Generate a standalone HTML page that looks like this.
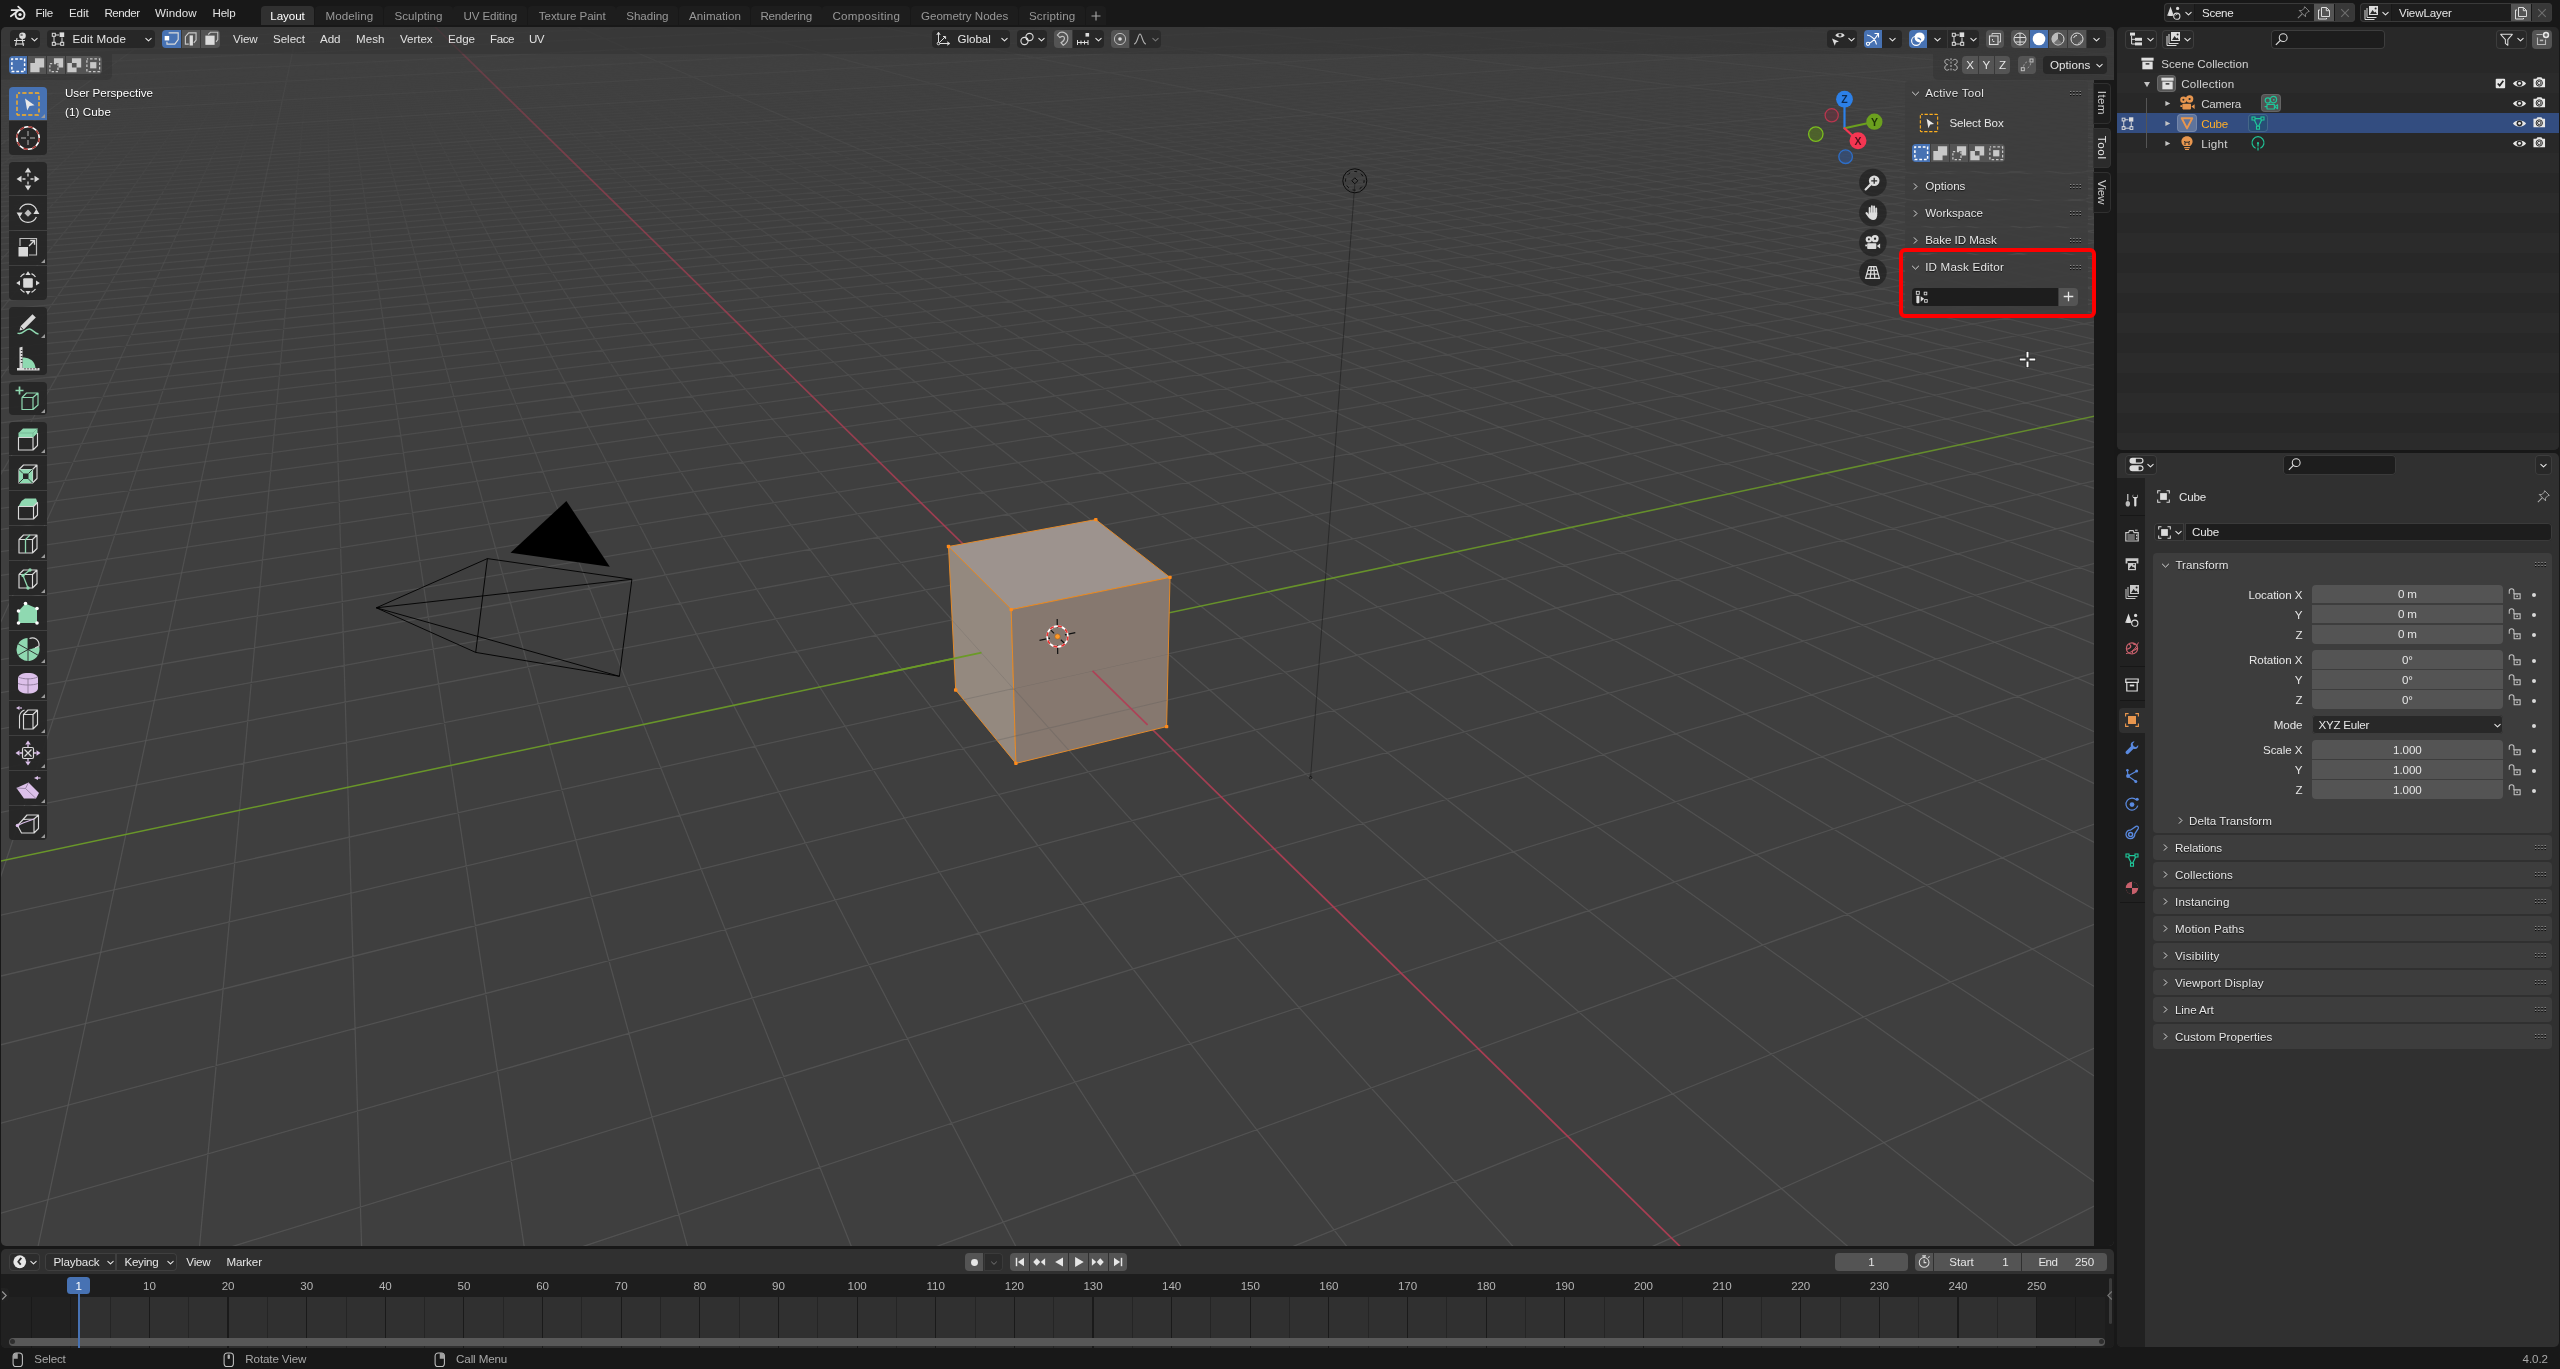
<!DOCTYPE html>
<html><head><meta charset="utf-8"><title>Blender</title><style>
html,body{margin:0;padding:0;background:#181818}
body{width:2560px;height:1369px;overflow:hidden;position:relative;font-family:"Liberation Sans",sans-serif;font-size:11.6px;color:#e6e6e6}
div,span,svg{position:absolute}
#root{left:0;top:0;width:2560px;height:1369px;will-change:transform}
svg{overflow:visible}
.t{white-space:pre;line-height:16px;height:16px}
.sh{text-shadow:0 1px 1px rgba(0,0,0,.75)}
</style></head><body>
<svg width="0" height="0" style="left:0;top:0"><defs><symbol id="chev" viewBox="0 0 16 16"><path d="M4.7 6.6L8 9.8L11.3 6.6" fill="none" stroke="#e6e6e6" stroke-width="1.3" stroke-linecap="round" stroke-linejoin="round"/></symbol><symbol id="ed_view3d" viewBox="0 0 16 16"><path d="M2 9.5H13M3.2 13H12.2M5 7L3.6 15M10 7L11.4 15" fill="none" stroke="#dcdcdc" stroke-width="1.1" /><circle cx="10.5" cy="4.8" r="3.3" fill="#dcdcdc"/><circle cx="9.6" cy="3.9" r="1.2" fill="#777"/></symbol><symbol id="editmode" viewBox="0 0 16 16"><path d="M4 5V12M5 13H11M12 12V6.5M5 4H9" fill="none" stroke="#dcdcdc" stroke-width="1" /><rect x="2.3" y="2.3" width="3" height="3" fill="none" stroke="#dcdcdc" stroke-width="1" /><rect x="2.3" y="11.3" width="3" height="3" fill="none" stroke="#dcdcdc" stroke-width="1" /><rect x="10.7" y="11.3" width="3" height="3" fill="none" stroke="#dcdcdc" stroke-width="1" /><rect x="9.6" y="1.4" width="4.6" height="4.6" fill="#dcdcdc"/></symbol><symbol id="vertsel" viewBox="0 0 16 16"><path d="M5 2.5H13.5V8.5L10.5 12.5H3.5V10.5" fill="none" stroke="#dcdcdc" stroke-width="1" /><rect x="1.5" y="5.3" width="4" height="4" fill="#fff"/></symbol><symbol id="edgesel" viewBox="0 0 16 16"><path d="M6 12.5H3V6L6 2.5H12.5V9L10.5 11.5" fill="none" stroke="#dcdcdc" stroke-width="1"  stroke-opacity=".85"/><rect x="6.8" y="4.8" width="2.9" height="9" fill="#dcdcdc"/></symbol><symbol id="facesel" viewBox="0 0 16 16"><path d="M5.5 4L7.5 2H14V8.5L12.5 10.5" fill="none" stroke="#dcdcdc" stroke-width="1"  stroke-opacity=".8"/><rect x="3" y="5" width="8.2" height="8.2" fill="#dcdcdc"/></symbol><symbol id="sm_new" viewBox="0 0 16 16"><rect x="2.5" y="2.5" width="11" height="11" fill="none" stroke="#fff" stroke-width="1.3" stroke-dasharray="2.4 1.6" stroke-dashoffset="1.2"/></symbol><symbol id="sm_ext" viewBox="0 0 16 16"><path d="M6 2H14V10H10V14H2V6H6Z" fill="#c8c8c8"/></symbol><symbol id="sm_sub" viewBox="0 0 16 16"><path d="M6 2H14V10H10V6H6Z" fill="#c8c8c8"/><path d="M2.5 6.5H9.5V13.5H2.5Z" fill="none" stroke="#c8c8c8" stroke-width="1.1" stroke-dasharray="2 1.5"/></symbol><symbol id="sm_inv" viewBox="0 0 16 16"><path d="M6 2H14V10H10V14H2V6H6ZM6 6V10H10V6Z" fill="#c8c8c8" fill-rule="evenodd"/></symbol><symbol id="sm_and" viewBox="0 0 16 16"><rect x="5.3" y="5.3" width="5.4" height="5.4" fill="#c8c8c8"/><rect x="2.5" y="2.5" width="11" height="11" fill="none" stroke="#c8c8c8" stroke-width="1.1" stroke-dasharray="2.2 1.6" stroke-dashoffset="1.1"/></symbol><symbol id="orient" viewBox="0 0 16 16"><path d="M3.5 1.8V12.5H14.2M3.5 12.5L10 6" fill="none" stroke="#dcdcdc" stroke-width="1" /><path d="M1.8 4L3.5 1.2L5.2 4M12 10.8L14.8 12.5L12 14.2M8 5.5H10.6V8" fill="none" stroke="#dcdcdc" stroke-width="1" /><circle cx="3.5" cy="12.5" r="1.3" fill="#282828" stroke="#dcdcdc"/></symbol><symbol id="pivot" viewBox="0 0 16 16"><circle cx="5.5" cy="10" r="3.6" fill="none" stroke="#dcdcdc" stroke-width="1.1" /><circle cx="10.5" cy="6" r="3.6" fill="none" stroke="#dcdcdc" stroke-width="1.1" /><circle cx="8" cy="8" r="1.2" fill="#dcdcdc"/></symbol><symbol id="magnet" viewBox="0 0 16 16"><path d="M3 4.5L5.2 2.3C8.5 1 12.5 3.5 12.3 7.5C12.2 10.5 10 12.5 8.2 13.5L6.2 11.3C8 10.3 9.3 9 9.3 7.3C9.3 5.8 7.6 4.8 5.2 6.6Z" fill="none" stroke="#dcdcdc" stroke-width="1"  stroke-opacity=".8"/></symbol><symbol id="snapinc" viewBox="0 0 16 16"><path d="M2 11.5H13M2.5 9V14M6 9.5V13.5M9.5 9.5V13.5M13 9V14" fill="none" stroke="#dcdcdc" stroke-width="1" /><rect x="10.5" y="2" width="3.6" height="3.6" fill="#dcdcdc"/></symbol><symbol id="propedit" viewBox="0 0 16 16"><circle cx="8" cy="8" r="5.6" fill="none" stroke="#dcdcdc" stroke-width="1"  stroke-opacity=".75"/><circle cx="8" cy="8" r="1.8" fill="#dcdcdc"/></symbol><symbol id="falloff" viewBox="0 0 16 16"><path d="M2 13C5.5 13 6 3 8 3C10 3 10.5 13 14 13" fill="none" stroke="#dcdcdc" stroke-width="1.1" /></symbol><symbol id="selectab" viewBox="0 0 16 16"><path d="M5.3 4.2C7.5 1.2 12.5 1.2 14.7 4.2C12.5 7.2 7.5 7.2 5.3 4.2Z" fill="#dcdcdc"/><circle cx="10" cy="4" r="1.6" fill="#282828"/><path d="M2 7.5L9 10.5L5.8 11.5L4.8 14.8Z" fill="#dcdcdc"/></symbol><symbol id="gizmo" viewBox="0 0 16 16"><path d="M2.5 13C6.5 12 10 8.5 13.2 2.8M9.5 2.5H13.5V6.5M2 4C6 4.5 10.5 8 11.5 13.5" fill="none" stroke="#fff" stroke-width="1.1" /><circle cx="3" cy="12.8" r="1.6" fill="#4772b3" stroke="#fff" stroke-width="1.1"/></symbol><symbol id="overlay" viewBox="0 0 16 16"><circle cx="9.6" cy="6.4" r="5" fill="#fff"/><circle cx="6.2" cy="9.8" r="4.6" fill="none" stroke="#fff" stroke-width="1.1"/><path d="M7.5 7.2A3 3 0 0 1 10.8 9.2" fill="none" stroke="#4772b3" stroke-width="1.2"/></symbol><symbol id="xray" viewBox="0 0 16 16"><path d="M5 4.5V2.5H13.5V11H11.5" fill="none" stroke="#dcdcdc" stroke-width="1"  stroke-opacity=".85"/><rect x="2.5" y="5" width="8.5" height="8.5" fill="none" stroke="#dcdcdc" stroke-width="1.1" /><path d="M5.5 8V10.5H8.5" fill="none" stroke="#dcdcdc" stroke-width="1" stroke-dasharray='1.6 1.2'/></symbol><symbol id="sh_wire" viewBox="0 0 16 16"><circle cx="8" cy="8" r="6" fill="none" stroke="#dcdcdc" stroke-width="1" /><path d="M8 2V14M2.3 6.5H13.7M3 11H13" fill="none" stroke="#dcdcdc" stroke-width="1" /></symbol><symbol id="sh_solid" viewBox="0 0 16 16"><circle cx="8" cy="8" r="6.3" fill="#fff"/></symbol><symbol id="sh_mat" viewBox="0 0 16 16"><circle cx="8" cy="8" r="6" fill="none" stroke="#dcdcdc" stroke-width="1"  /><path d="M8 2A6 6 0 0 0 3.8 12.3L8 8Z" fill="#bbb"/><path d="M8 8L12.3 12.3A6 6 0 0 1 3.8 12.3Z" fill="#888" fill-opacity=".6"/></symbol><symbol id="sh_rend" viewBox="0 0 16 16"><circle cx="8" cy="8" r="6" fill="none" stroke="#dcdcdc" stroke-width="1" /><path d="M4.6 7A3.6 3.6 0 0 1 8 4.4" fill="none" stroke="#dcdcdc" stroke-width="1" /><path d="M12.5 9.5A5 5 0 0 1 9 12.8" fill="none" stroke="#dcdcdc" stroke-width="1.6"  stroke-opacity=".45"/></symbol><symbol id="mirror" viewBox="0 0 16 16"><path d="M8 1.2V14.8" fill="none" stroke="#dcdcdc" stroke-width="1" stroke-dasharray='2 1.4'/><path d="M6.3 3.6C5 1.6 1.8 2 1.8 4.6C1.8 6.2 3.2 7.2 4.6 7.6C3 8 1.6 9.2 1.8 11C2 13.6 5 13.8 6.3 12M9.7 3.6C11 1.6 14.2 2 14.2 4.6C14.2 6.2 12.8 7.2 11.4 7.6C13 8 14.4 9.2 14.2 11C14 13.6 11 13.8 9.7 12" fill="none" stroke="#dcdcdc" stroke-width="1" /></symbol><symbol id="automerge" viewBox="0 0 16 16"><rect x="2.3" y="10.7" width="3" height="3" fill="none" stroke="#dcdcdc" stroke-width="1"  stroke-opacity=".8"/><rect x="11" y="2" width="3" height="3" fill="none" stroke="#dcdcdc" stroke-width="1"  stroke-opacity=".8"/><path d="M4.5 9.5C5 6.5 7 4.8 9.8 4.3M11.8 6.2C11.3 9 9.6 11 6.8 11.8" fill="none" stroke="#9a9a9a" stroke-width="1" stroke-dasharray='2.2 1.6'/></symbol><symbol id="t_select" viewBox="0 0 28 28"><rect x="3" y="3" width="22" height="22" rx="1" fill="none" stroke="#ffb01f" stroke-width="1.4" stroke-dasharray="4.2 2.1" stroke-dashoffset="2"/><path d="M11 8.5L20.5 15.2L15.6 16L13.2 20.6Z" fill="#e8e8e8"/></symbol><symbol id="t_cursor" viewBox="0 0 28 28"><circle cx="14" cy="14" r="11.2" fill="none" stroke="#fff" stroke-width="1.5"/><circle cx="14" cy="14" r="11.2" fill="none" stroke="#a0302c" stroke-width="1.5" stroke-dasharray="4.4 4.4"/><path d="M14 7V12M14 16V21M7 14H12M16 14H21" stroke="#888" stroke-width="1.5" fill="none"/></symbol><symbol id="t_move" viewBox="0 0 28 28"><path d="M14 2.5L17.2 7.5H10.8ZM14 25.5L17.2 20.5H10.8ZM2.5 14L7.5 10.8V17.2ZM25.5 14L20.5 10.8V17.2Z" fill="#d9d9d9"/><path d="M14 8.5V11.5M14 16.5V19.5M8.5 14H11.5M16.5 14H19.5" stroke="#d9d9d9" stroke-width="1.3" fill="none"/></symbol><symbol id="t_rotate" viewBox="0 0 28 28"><path d="M5.6 10.5A9.3 9.3 0 0 1 22.4 10.5M22.4 18A9.3 9.3 0 0 1 5.6 18" fill="none" stroke="#d9d9d9" stroke-width="1.2"/><path d="M2.6 13.5H8.6L5.6 18.5ZM19.4 15H25.4L22.4 10Z" fill="#d9d9d9"/><path d="M14 10.6L17.6 14.2L14 17.8L10.4 14.2Z" fill="#bdbdbd"/></symbol><symbol id="t_scale" viewBox="0 0 28 28"><path d="M6 12V4.5H22.5V21H15" fill="none" stroke="#bdbdbd" stroke-width="1.2"/><rect x="4.5" y="13" width="9.5" height="9.5" fill="#d9d9d9"/><path d="M15 12L20 7M16.2 6.5H20.5V10.8" fill="none" stroke="#d9d9d9" stroke-width="1.3"/></symbol><symbol id="t_transform" viewBox="0 0 28 28"><rect x="9.2" y="9.2" width="9.6" height="9.6" rx="1" fill="#d9d9d9"/><path d="M6.5 8A10 10 0 0 1 10.5 4.6M17.5 4.6A10 10 0 0 1 21.5 8M21.5 20A10 10 0 0 1 17.5 23.4M10.5 23.4A10 10 0 0 1 6.5 20" fill="none" stroke="#d9d9d9" stroke-width="1.2"/><path d="M14 2.2L16.6 6H11.4ZM14 25.8L16.6 22H11.4ZM2.2 14L6 11.4V16.6ZM25.8 14L22 11.4V16.6Z" fill="#d9d9d9"/></symbol><symbol id="t_annotate" viewBox="0 0 28 28"><path d="M6.5 16.2L18.5 4.2L21.8 7.5L9.8 19.5L5.5 20.5Z" fill="#d9d9d9"/><path d="M6.2 16.5L9.5 19.8" stroke="#272727" stroke-width="1"/><path d="M3.5 23C8 26 11 18.5 15.5 19C19 19.5 20.5 23.5 24.5 24" fill="none" stroke="#8fd9b1" stroke-width="1.4"/></symbol><symbol id="t_measure" viewBox="0 0 28 28"><path d="M9 25A14 14 0 0 1 23 25V25H9Z" fill="none"/><path d="M8.5 24.5V13.5A11.5 11.5 0 0 1 21.5 24.5Z" fill="#8fd9b1"/><path d="M5.5 3.5L8.5 2.8V24.5H5.5ZM3 24H25.5V26.5H3Z" fill="#d9d9d9"/><path d="M8.5 6.5H6.8M8.5 9.5H6.8M8.5 12.5H6.8M8.5 15.5H6.8M8.5 18.5H6.8M11 24V25.5M14 24V25.5M17 24V25.5M20 24V25.5M23 24V25.5" stroke="#272727" stroke-width=".9"/></symbol><symbol id="t_addcube" viewBox="0 0 28 28"><path d="M8 12.5H19V24.5H8ZM8 12.5L12.5 8H24V20L19 24.5M19 12.5L24 8" fill="none" stroke="#8fd9b1" stroke-width="1.2" stroke-linejoin="round"/><path d="M5.5 1.5V9.5M1.5 5.5H9.5" stroke="#8fd9b1" stroke-width="1.7" fill="none"/></symbol><symbol id="t_extrude" viewBox="0 0 28 28"><path d="M4.5 8L9 3.5H23.5L19 8V12.5H4.5ZM19 8L23.5 3.5V8L19 12.5Z" fill="#8fd9b1"/><path d="M4.5 12.5H19V25H4.5ZM19 25L23.5 20.5V8" fill="none" stroke="#d9d9d9" stroke-width="1.15" stroke-linejoin="round"/><path d="M4.5 8H19L23.5 3.5M19 8V12.5" fill="none" stroke="#6fae8d" stroke-width=".7"/></symbol><symbol id="t_inset" viewBox="0 0 28 28"><path d="M5 10.5H18.5V24H5ZM5 10.5L9.5 6H23V19.5L18.5 24M18.5 10.5L23 6" fill="none" stroke="#d9d9d9" stroke-width="1.15" stroke-linejoin="round"/><path d="M5 10.5H18.5V24H5Z" fill="#8fd9b1"/><rect x="9" y="14.5" width="5.5" height="5.5" fill="#272727"/><path d="M5 10.5L9 14.5M18.5 10.5L14.5 14.5M5 24L9 20M18.5 24L14.5 20" stroke="#272727" stroke-width=".9"/></symbol><symbol id="t_bevel" viewBox="0 0 28 28"><path d="M4.5 12.5L7.5 7L11 4.5H22L23.5 8.5L19.5 12.5Z" fill="#8fd9b1"/><path d="M4.5 12.5H19.5V25H4.5ZM19.5 25L23.5 21V8.5L19.5 12.5" fill="none" stroke="#d9d9d9" stroke-width="1.15" stroke-linejoin="round"/></symbol><symbol id="t_loopcut" viewBox="0 0 28 28"><path d="M5 10.5H18.5V24H5ZM5 10.5L9.5 6H23V19.5L18.5 24M18.5 10.5L23 6" fill="none" stroke="#d9d9d9" stroke-width="1.15" stroke-linejoin="round"/><path d="M11.5 24V10.5L16 6" fill="none" stroke="#8fd9b1" stroke-width="1.3"/></symbol><symbol id="t_knife" viewBox="0 0 28 28"><path d="M5 10.5H18.5V24H5ZM5 10.5L9.5 6H23V19.5L18.5 24M18.5 10.5L23 6" fill="none" stroke="#d9d9d9" stroke-width="1.15" stroke-linejoin="round"/><path d="M16 6L9 11.5L14 24" fill="none" stroke="#8fd9b1" stroke-width="1.3"/><circle cx="16" cy="6" r="1.7" fill="#8fd9b1"/><circle cx="9" cy="11.5" r="1.7" fill="#8fd9b1"/><circle cx="14" cy="24" r="1.7" fill="#8fd9b1"/></symbol><symbol id="t_polybuild" viewBox="0 0 28 28"><path d="M4.5 24V12L11.5 4.5L23 9.5V24Z" fill="#8fd9b1"/><g fill="#fff"><circle cx="4.5" cy="24" r="1.8"/><circle cx="4.5" cy="12" r="1.8"/><circle cx="11.5" cy="4.5" r="1.8"/><circle cx="23" cy="9.5" r="1.8"/><circle cx="23" cy="24" r="1.8"/></g></symbol><symbol id="t_spin" viewBox="0 0 28 28"><path d="M14 15.5L14 4A11.5 11.5 0 1 0 25 12Z" fill="#8fd9b1"/><path d="M14 15.5V4M14 15.5L4 9.8M14 15.5L4 21.2M14 15.5V27M14 15.5L24 21.2M14 15.5L25 12" stroke="#272727" stroke-width=".9" fill="none"/><path d="M15.5 4.5C20 2.5 25.5 5.5 25 12L21 14" fill="none" stroke="#d9d9d9" stroke-width="1.1"/></symbol><symbol id="t_smooth" viewBox="0 0 28 28"><path d="M14 4C20 4 24 6 24 9.5V19C24 22.5 20 24.5 14 24.5C8 24.5 4 22.5 4 19V9.5C4 6 8 4 14 4Z" fill="#dcc0ea"/><path d="M4 14.5C9 16.5 19 16.5 24 14.5M14 9.5V24.5M4.5 8C9 10.5 19 10.5 23.5 8" fill="none" stroke="#8d7a98" stroke-width=".9"/></symbol><symbol id="t_edgeslide" viewBox="0 0 28 28"><path d="M9.5 25V10.5L14 6H23.5V20.5L19 25ZM9.5 10.5H19V25M19 10.5L23.5 6" fill="none" stroke="#d9d9d9" stroke-width="1.15" stroke-linejoin="round"/><path d="M5.5 24.5V12C6 9 8 7 10.5 6" fill="none" stroke="#d9d9d9" stroke-width="1.1"/><path d="M2 4L5.5 2V6Z" fill="#dcc0ea"/><path d="M5.5 4H8" stroke="#dcc0ea" stroke-width="1.2"/></symbol><symbol id="t_shrink" viewBox="0 0 28 28"><path d="M14 1.5L16.8 5.5H11.2ZM14 26.5L16.8 22.5H11.2ZM1.5 14L5.5 11.2V16.8ZM26.5 14L22.5 11.2V16.8Z" fill="#dcc0ea"/><path d="M14 5.5V8M14 20V22.5M5.5 14H8M20 14H22.5" stroke="#dcc0ea" stroke-width="1.3"/><rect x="8.5" y="8.5" width="11" height="11" rx="1.5" fill="none" stroke="#d9d9d9" stroke-width="1.2"/><path d="M10.5 10.5L17.5 17.5M17.5 10.5L10.5 17.5" stroke="#d9d9d9" stroke-width="1.3"/><path d="M11 12.5L14 10.8L17 12.5M11 15.5L14 17.2L17 15.5" fill="none" stroke="#d9d9d9" stroke-width=".1"/></symbol><symbol id="t_shear" viewBox="0 0 28 28"><path d="M2.5 14L14.5 8.5L25 19L22 24.5L10 24.5Z" fill="#dcc0ea"/><path d="M14.5 8.5L11.5 14.5L22 24.5M11.5 14.5L2.5 14" fill="none" stroke="#8d7a98" stroke-width=".8"/><path d="M20 4L24 2V6Z" fill="#dcc0ea"/><path d="M24 4H26.5" stroke="#dcc0ea" stroke-width="1.2"/></symbol><symbol id="t_rip" viewBox="0 0 28 28"><path d="M9 10.5L13 6H24.5V19.5L20 24H7.5L3.5 16.5ZM20 10V24M20 10L24.5 6M9 10.5L20 10" fill="none" stroke="#d9d9d9" stroke-width="1.15" stroke-linejoin="round"/><path d="M3.5 16.5L9 14L20 10" fill="none" stroke="#dcc0ea" stroke-width="1.1"/><circle cx="3.5" cy="16.5" r="1.8" fill="#dcc0ea"/></symbol><symbol id="nav_zoom" viewBox="0 0 16 16"><circle cx="9.6" cy="6.4" r="5" fill="#dcdcdc"/><path d="M9.6 3.6V9.2M6.8 6.4H12.4" stroke="#2a2a2a" stroke-width="1.2"/><path d="M6 10L1.5 14.5" stroke="#dcdcdc" stroke-width="2" stroke-linecap="round"/></symbol><symbol id="nav_pan" viewBox="0 0 16 16"><path d="M5.3 3.8V9M7.4 2V9M9.5 2.4V9M11.5 4.2V9.5" stroke="#dcdcdc" stroke-width="1.75" stroke-linecap="round" fill="none"/><path d="M4.45 8H12.4V10.5C12.4 13 11 15 8.6 15C6.6 15 5.6 14.2 4.8 12.8Z" fill="#dcdcdc"/><path d="M5.4 12.6L2.4 8.6" stroke="#dcdcdc" stroke-width="2" stroke-linecap="round"/></symbol><symbol id="nav_cam" viewBox="0 0 16 16"><circle cx="4.6" cy="5" r="3" fill="#dcdcdc"/><circle cx="10.4" cy="4.4" r="3.4" fill="#dcdcdc"/><circle cx="4.6" cy="5" r="1" fill="#2a2a2a"/><circle cx="10.4" cy="4.4" r="1.1" fill="#2a2a2a"/><rect x="3" y="8.6" width="8.6" height="5.4" rx=".8" fill="#dcdcdc"/><path d="M12 11.3L15.2 9V13.6Z" fill="#dcdcdc"/><path d="M1.2 10H3V11.6H1.2Z" fill="#dcdcdc"/></symbol><symbol id="nav_persp" viewBox="0 0 16 16"><path d="M4.6 2.5H11.4L14.5 13.5H1.5Z" fill="none" stroke="#dcdcdc" stroke-width="1.2" stroke-linejoin="round"/><path d="M6.9 2.5L5.8 13.5M9.1 2.5L10.2 13.5M3.7 6H12.3M2.7 9.6H13.3" stroke="#dcdcdc" stroke-width="1.2" fill="none"/></symbol><symbol id="grip" viewBox="0 0 11 5.2"><rect x="0.0" y="0" width="1.3" height="1" fill="#8c8c8c"/><rect x="0.0" y="1" width="1.3" height="1.1" fill="#0c0c0c"/><rect x="0.0" y="3" width="1.3" height="1" fill="#8c8c8c"/><rect x="0.0" y="4" width="1.3" height="1.1" fill="#0c0c0c"/><rect x="3.2" y="0" width="1.3" height="1" fill="#8c8c8c"/><rect x="3.2" y="1" width="1.3" height="1.1" fill="#0c0c0c"/><rect x="3.2" y="3" width="1.3" height="1" fill="#8c8c8c"/><rect x="3.2" y="4" width="1.3" height="1.1" fill="#0c0c0c"/><rect x="6.4" y="0" width="1.3" height="1" fill="#8c8c8c"/><rect x="6.4" y="1" width="1.3" height="1.1" fill="#0c0c0c"/><rect x="6.4" y="3" width="1.3" height="1" fill="#8c8c8c"/><rect x="6.4" y="4" width="1.3" height="1.1" fill="#0c0c0c"/><rect x="9.6" y="0" width="1.3" height="1" fill="#8c8c8c"/><rect x="9.6" y="1" width="1.3" height="1.1" fill="#0c0c0c"/><rect x="9.6" y="3" width="1.3" height="1" fill="#8c8c8c"/><rect x="9.6" y="4" width="1.3" height="1.1" fill="#0c0c0c"/></symbol><symbol id="chevr" viewBox="0 0 16 16"><path d="M6.4 4.6L9.8 8L6.4 11.4" fill="none" stroke="#dcdcdc" stroke-width="1.2" stroke-linecap="round" stroke-linejoin="round"/></symbol><symbol id="chevd" viewBox="0 0 16 16"><path d="M4.2 6.3L8 10L11.8 6.3" fill="none" stroke="#dcdcdc" stroke-width="1.2" stroke-linecap="round" stroke-linejoin="round"/></symbol><symbol id="plus" viewBox="0 0 16 16"><path d="M8 3.5V12.5M3.5 8H12.5" stroke="#e6e6e6" stroke-width="1.2" fill="none"/></symbol><symbol id="idmask" viewBox="0 0 16 16"><rect x="1.5" y="1.5" width="3.4" height="3.4" fill="none" stroke="#dcdcdc" stroke-width="1"/><rect x="10.5" y="2.5" width="3" height="3" fill="none" stroke="#dcdcdc" stroke-width="1"/><rect x="11" y="11" width="3" height="3" fill="none" stroke="#dcdcdc" stroke-width="1"/><path d="M1.6 6.5H5V14.5L3.3 15.5L1.6 14.5Z" fill="#dcdcdc"/><path d="M6.5 13.5V7L10.5 10Z" fill="#dcdcdc"/></symbol><symbol id="blender" viewBox="0 0 16 16"><circle cx="10" cy="9.6" r="4.5" fill="none" stroke="#e6e6e6" stroke-width="1.9"/><circle cx="10" cy="9.6" r="1.7" fill="#e6e6e6"/><path d="M1.6 5.2H9M8.2 1.6L12.6 5.6M0.8 11.3L7.5 6.2" stroke="#e6e6e6" stroke-width="1.7" fill="none" stroke-linecap="round"/></symbol><symbol id="scene" viewBox="0 0 16 16"><path d="M4.5 1.5L7.3 9.5H1.7Z" fill="#dcdcdc"/><path d="M1 10C1 8.5 8 8.5 8 10C8 11.3 1 11.3 1 10Z" fill="#dcdcdc"/><circle cx="10.8" cy="11.2" r="3.1" fill="none" stroke="#dcdcdc" stroke-width="1.1"/><circle cx="11.6" cy="3.4" r="1.6" fill="#dcdcdc"/><path d="M9.6 10.4A1.6 1.6 0 0 1 11.4 9.4" fill="none" stroke="#dcdcdc" stroke-width=".9"/></symbol><symbol id="viewlayer" viewBox="0 0 16 16"><path d="M2 5V14.5H11.5M4 3V12.5H13.5" fill="none" stroke="#dcdcdc" stroke-width="1"/><rect x="6" y="1" width="9" height="9" fill="#dcdcdc"/><path d="M7 9L9.6 5L11.4 7.6L12.4 6.6L14 9Z" fill="#2a2a2a"/><circle cx="12.6" cy="3.4" r="1" fill="#2a2a2a"/></symbol><symbol id="pin" viewBox="0 0 16 16"><path d="M9.2 1.8L14.2 6.8L12.6 7.2L10 9.8L10.2 12.6L3.4 5.8L6.2 6L8.8 3.4Z" fill="none" stroke="#8a8a8a" stroke-width="1" stroke-linejoin="round"/><path d="M6.6 9.4L2 14" stroke="#8a8a8a" stroke-width="1.1"/></symbol><symbol id="copy" viewBox="0 0 16 16"><path d="M5.5 2.5H10.5L13.5 5.5V11.5H5.5ZM10.3 2.5V5.7H13.5" fill="none" stroke="#dcdcdc" stroke-width="1"/><path d="M4 5H2.5V14H10.5V13" fill="none" stroke="#dcdcdc" stroke-width="1"/></symbol><symbol id="xclose" viewBox="0 0 16 16"><path d="M4.2 4.2L11.8 11.8M11.8 4.2L4.2 11.8" stroke="#6e6e6e" stroke-width="1.1" fill="none"/></symbol><symbol id="ed_outliner" viewBox="0 0 16 16"><rect x="2" y="1.6" width="5" height="3" fill="#dcdcdc"/><rect x="7" y="6.8" width="7" height="3" fill="#dcdcdc"/><rect x="7" y="11.4" width="7" height="3" fill="#dcdcdc"/><path d="M3.6 4.6V13H7M3.6 8.3H7" fill="none" stroke="#dcdcdc" stroke-width="1"/></symbol><symbol id="search" viewBox="0 0 16 16"><circle cx="9.8" cy="6" r="4.2" fill="none" stroke="#dcdcdc" stroke-width="1.1"/><path d="M6.8 9L2 13.8" stroke="#dcdcdc" stroke-width="1.3"/></symbol><symbol id="filter" viewBox="0 0 16 16"><path d="M1.8 2.5H14.2L9.4 8.2V14.2L6.8 12.2V8.2Z" fill="none" stroke="#dcdcdc" stroke-width="1.1" stroke-linejoin="round"/></symbol><symbol id="newcoll" viewBox="0 0 16 16"><path d="M2.5 3.5H8.5M3.5 6.5V13.5H11.5V8.5" fill="none" stroke="#b8b8b8" stroke-width="1.1"/><rect x="5.8" y="8.6" width="3.4" height="1.6" fill="#b8b8b8"/><circle cx="12" cy="4" r="3.2" fill="#e6e6e6"/><path d="M12 2.2V5.8M10.2 4H13.8" stroke="#444" stroke-width="1"/></symbol><symbol id="coll" viewBox="0 0 16 16"><path d="M1.5 1.8H14.5V5H1.5Z" fill="#e0e0e0"/><path d="M2.5 6H13.5V14.2H2.5Z" fill="#e0e0e0"/><rect x="6" y="7.6" width="4" height="1.6" fill="#333"/></symbol><symbol id="ob_camera" viewBox="0 0 16 16"><circle cx="4.4" cy="4.8" r="3.2" fill="#e8964e"/><circle cx="10.6" cy="4" r="3.7" fill="#e8964e"/><circle cx="4.4" cy="4.8" r="1" fill="#282828"/><circle cx="10.6" cy="4" r="1.1" fill="#282828"/><rect x="3.4" y="8.8" width="8.6" height="5.6" rx=".8" fill="#e8964e"/><path d="M12.4 11.6L15.6 9.2V14Z" fill="#e8964e"/><path d="M1.4 10.2H3.4V12H1.4Z" fill="#e8964e"/></symbol><symbol id="ob_mesh" viewBox="0 0 16 16"><path d="M2 2.5H14L8 14.2Z" fill="none" stroke="#e8964e" stroke-width="2.2" stroke-linejoin="round"/></symbol><symbol id="ob_light" viewBox="0 0 16 16"><path d="M8 1.2C11.6 1.2 13.6 3.8 13.6 6.4C13.6 8.6 12.2 9.8 11.2 11H4.8C3.8 9.8 2.4 8.6 2.4 6.4C2.4 3.8 4.4 1.2 8 1.2Z" fill="#e8964e"/><path d="M5.2 12H10.8V13.2H5.2ZM6 14H10V15H6Z" fill="#e8964e"/><path d="M6 10V7.2H10V10M6 7.2L5.4 6M10 7.2L10.6 6" fill="none" stroke="#282828" stroke-width="1"/></symbol><symbol id="d_camera" viewBox="0 0 16 16"><circle cx="4.8" cy="5.4" r="2.6" fill="none" stroke="#1fc79a" stroke-width="1.2"/><circle cx="10.4" cy="4.6" r="3.2" fill="none" stroke="#1fc79a" stroke-width="1.2"/><circle cx="10.8" cy="4.8" r=".9" fill="#1fc79a"/><rect x="4" y="9.4" width="7.4" height="4.6" rx=".6" fill="none" stroke="#1fc79a" stroke-width="1.2"/><path d="M11.6 11.8L14.6 9.8V13.8Z" fill="none" stroke="#1fc79a" stroke-width="1.1" stroke-linejoin="round"/><path d="M1.6 11.6H4" stroke="#1fc79a" stroke-width="1.2"/></symbol><symbol id="d_mesh" viewBox="0 0 16 16"><path d="M3.6 3.6H12.4M3.6 3.6L8 12.6M12.4 3.6L8 12.6" fill="none" stroke="#1fc79a" stroke-width="1.2"/><rect x="2" y="2" width="3" height="3" fill="#2a4a66" stroke="#1fc79a" stroke-width="1.1"/><rect x="11" y="2" width="3" height="3" fill="#2a4a66" stroke="#1fc79a" stroke-width="1.1"/><rect x="6.5" y="11.2" width="3" height="3" fill="#2a4a66" stroke="#1fc79a" stroke-width="1.1"/></symbol><symbol id="d_light" viewBox="0 0 16 16"><path d="M5.6 13.2A6 6 0 1 1 10.4 13.2" fill="none" stroke="#1fc79a" stroke-width="1.2"/><circle cx="8" cy="8.2" r="1.1" fill="#1fc79a"/><path d="M8 9V11.4M8 12.6V15.4" stroke="#1fc79a" stroke-width="1.2"/></symbol><symbol id="eye" viewBox="0 0 16 16"><path d="M1 8C3.4 3.6 12.6 3.6 15 8C12.6 12.4 3.4 12.4 1 8Z" fill="#e6e6e6"/><circle cx="8" cy="7.8" r="3.1" fill="#2a2a2a"/><circle cx="8" cy="7.8" r="1.5" fill="#e6e6e6"/></symbol><symbol id="rcam" viewBox="0 0 16 16"><path d="M1.6 4.2H4.8L6 2.4H10.4L11.6 4.2H14.4V13.6H1.6Z" fill="#e6e6e6"/><circle cx="8" cy="8.8" r="3.5" fill="none" stroke="#2a2a2a" stroke-width="1.1"/><circle cx="8" cy="8.8" r="1.9" fill="none" stroke="#2a2a2a" stroke-width="1"/></symbol><symbol id="check" viewBox="0 0 16 16"><rect x="3" y="3" width="10.4" height="10.4" rx="1" fill="#e6e6e6"/><path d="M5.2 8.2L7.4 10.6L11.4 5.2" fill="none" stroke="#222" stroke-width="1.8"/></symbol><symbol id="tri_d" viewBox="0 0 16 16"><path d="M4.6 5.8H11.4L8 11.6Z" fill="#c4c4c4"/></symbol><symbol id="tri_r" viewBox="0 0 16 16"><path d="M5.4 4.8L11.4 8L5.4 11.2Z" fill="#c4c4c4"/></symbol><symbol id="ed_props" viewBox="0 0 16 16"><rect x="1.4" y="1.6" width="13.2" height="5.6" rx="2.8" fill="#dcdcdc"/><rect x="1.4" y="8.8" width="13.2" height="5.6" rx="2.8" fill="#dcdcdc"/><path d="M7.4 2.7H11.8A1.7 1.7 0 0 1 11.8 6.1H7.4Z" fill="#2a2a2a"/><path d="M10 9.9H11.8A1.7 1.7 0 0 1 11.8 13.3H10Z" fill="#2a2a2a"/></symbol><symbol id="p_tool" viewBox="0 0 16 16"><path d="M3.8 2V8.4" stroke="#dcdcdc" stroke-width="1.1"/><ellipse cx="3.8" cy="11.8" rx="2.2" ry="2.8" fill="#bdbdbd"/><path d="M9.2 2.2C8 3.6 8.4 5.8 10.2 6.6V13.4C10.2 14.8 12.4 14.8 12.4 13.4V6.6C14.2 5.8 14.6 3.6 13.4 2.2V5H9.2Z" fill="#dcdcdc"/></symbol><symbol id="p_render" viewBox="0 0 16 16"><path d="M1.8 5.6H4.6L5.4 3.6H9.2L10 5.6H14.2V14H1.8Z" fill="none" stroke="#c8c8c8" stroke-width="1.2"/><path d="M3.4 8H10.8M3.4 10H10.8M3.4 12H10.8" stroke="#c8c8c8" stroke-width=".9"/><rect x="12" y="7.6" width="1.4" height="1.6" fill="#c8c8c8"/><rect x="12" y="10.6" width="1.4" height="1.6" fill="#c8c8c8"/><path d="M11 3.2H13.6" stroke="#c8c8c8" stroke-width="1"/></symbol><symbol id="p_output" viewBox="0 0 16 16"><path d="M1.6 2.2H14.4V7.6H12.6V5H3.4V7.6H1.6Z" fill="#c8c8c8"/><rect x="4" y="7" width="8" height="7.2" fill="#c8c8c8"/><path d="M5 13L7.4 9.4L9 11.6L9.8 10.8L11 13Z" fill="#222"/><circle cx="10" cy="8.6" r=".8" fill="#222"/></symbol><symbol id="p_vlayer" viewBox="0 0 16 16"><path d="M2 5V14.5H11.5M4 3V12.5H13.5" fill="none" stroke="#c8c8c8" stroke-width="1"/><rect x="6" y="1" width="9" height="9" fill="#c8c8c8"/><path d="M7 9L9.6 5L11.4 7.6L12.4 6.6L14 9Z" fill="#222"/><circle cx="12.6" cy="3.4" r="1" fill="#222"/></symbol><symbol id="p_scene" viewBox="0 0 16 16"><path d="M4.5 1.5L7.3 9.5H1.7Z" fill="#dcdcdc"/><path d="M1 10C1 8.5 8 8.5 8 10C8 11.3 1 11.3 1 10Z" fill="#dcdcdc"/><circle cx="10.8" cy="11.2" r="3.1" fill="none" stroke="#dcdcdc" stroke-width="1.1"/><circle cx="11.6" cy="3.4" r="1.6" fill="#dcdcdc"/></symbol><symbol id="p_world" viewBox="0 0 16 16"><circle cx="8" cy="8.4" r="5.6" fill="none" stroke="#c8606c" stroke-width="1.2"/><path d="M5 4.2C6.5 5 7.2 6 6.4 7.4C5.6 8.6 4 8.4 3 9.4M8.6 13.6C8 12 8.4 10.6 10 10.2C11.4 9.9 12 8.6 13.2 8.4M9 3C9.6 4.4 11 4.6 12 4.4" fill="none" stroke="#c8606c" stroke-width="1.3"/><path d="M2 13.6C6 13.6 12 9 14.4 2.4" fill="none" stroke="#c8606c" stroke-width="1"/></symbol><symbol id="p_coll" viewBox="0 0 16 16"><path d="M1.8 2H14.2V5.4H1.8Z" fill="none" stroke="#e0e0e0" stroke-width="1.2"/><path d="M2.8 5.6V14H13.2V5.6" fill="none" stroke="#e0e0e0" stroke-width="1.2"/><rect x="5.8" y="7.6" width="4.4" height="1.8" fill="#e0e0e0"/></symbol><symbol id="p_object" viewBox="0 0 16 16"><rect x="4" y="4" width="8" height="8" fill="#e8964e"/><path d="M1.6 4.6V1.6H4.6M11.4 1.6H14.4V4.6M14.4 11.4V14.4H11.4M4.6 14.4H1.6V11.4" fill="none" stroke="#e8964e" stroke-width="1.1"/></symbol><symbol id="p_modifier" viewBox="0 0 16 16"><path d="M10.6 1.6C8 1.2 6 3.6 7 6.2L1.8 11.6C.8 13 2.8 15 4.2 14L9.6 8.8C12.4 9.8 14.8 7.6 14.2 5L12 7.2L9.6 6.2L8.6 3.8Z" fill="#5a8ae0"/></symbol><symbol id="p_particles" viewBox="0 0 16 16"><path d="M4 8L12.4 3.2M4 8L11.6 13.2M4 8L3.4 2.4" stroke="#5a8ae0" stroke-width="1.1" fill="none"/><circle cx="4" cy="8" r="1.9" fill="#5a8ae0"/><circle cx="12.6" cy="3" r="1.5" fill="#5a8ae0"/><circle cx="11.8" cy="13.4" r="1.5" fill="#5a8ae0"/><circle cx="3.4" cy="2.2" r="1.3" fill="#5a8ae0"/></symbol><symbol id="p_physics" viewBox="0 0 16 16"><path d="M12.6 4.2A6 6 0 1 0 13.8 9.6" fill="none" stroke="#5a8ae0" stroke-width="1.2"/><circle cx="8" cy="8.6" r="2.4" fill="#5a8ae0"/><circle cx="13.2" cy="3.2" r="1.5" fill="#5a8ae0"/></symbol><symbol id="p_constraint" viewBox="0 0 16 16"><path d="M2 10.5C2 8 4 6 6.4 6.2L12 2.4C13.6 1.6 15 3.2 14.2 4.6L10.8 10C11 12.6 9 14.6 6.6 14.6C4 14.6 2 12.8 2 10.5Z" fill="none" stroke="#5a8ae0" stroke-width="1.3"/><circle cx="6.6" cy="10.4" r="2" fill="none" stroke="#5a8ae0" stroke-width="1.5"/></symbol><symbol id="p_data" viewBox="0 0 16 16"><path d="M3.6 3.6H12.4M3.6 3.6L8 12.6M12.4 3.6L8 12.6" fill="none" stroke="#1fc79a" stroke-width="1.2"/><rect x="2" y="2" width="3" height="3" fill="#222" stroke="#1fc79a" stroke-width="1.1"/><rect x="11" y="2" width="3" height="3" fill="#222" stroke="#1fc79a" stroke-width="1.1"/><rect x="6.5" y="11.2" width="3" height="3" fill="#222" stroke="#1fc79a" stroke-width="1.1"/></symbol><symbol id="p_material" viewBox="0 0 16 16"><circle cx="8" cy="8" r="6.2" fill="#c8606c"/><path d="M8 8V1.8A6.2 6.2 0 0 1 14.2 8Z" fill="#222"/><path d="M8 8V14.2A6.2 6.2 0 0 1 1.8 8Z" fill="#222" fill-opacity=".0"/><path d="M8 8H1.8A6.2 6.2 0 0 0 8 14.2Z" fill="#222"/></symbol><symbol id="objdata" viewBox="0 0 16 16"><rect x="4.4" y="4.4" width="7.2" height="7.2" fill="#dcdcdc"/><path d="M1.8 4.8V1.8H4.8M11.2 1.8H14.2V4.8M14.2 11.2V14.2H11.2M4.8 14.2H1.8V11.2" fill="none" stroke="#dcdcdc" stroke-width="1.1"/></symbol><symbol id="pin2" viewBox="0 0 16 16"><path d="M9.2 1.8L14.2 6.8L12.6 7.2L10 9.8L10.2 12.6L3.4 5.8L6.2 6L8.8 3.4Z" fill="none" stroke="#a8a8a8" stroke-width="1" stroke-linejoin="round"/><path d="M6.6 9.4L2 14" stroke="#a8a8a8" stroke-width="1.1"/></symbol><symbol id="unlock" viewBox="0 0 16 16"><path d="M7.6 8.4H14V13.6H7.6Z" fill="none" stroke="#c4c4c4" stroke-width="1.1"/><path d="M2.4 8.2V5.4C2.4 2.2 7.4 2.2 7.4 5.4V8.4" fill="none" stroke="#c4c4c4" stroke-width="1.1"/><rect x="10" y="10.2" width="1.6" height="1.6" fill="#c4c4c4"/></symbol><symbol id="ed_time" viewBox="0 0 16 16"><circle cx="8" cy="8" r="6.6" fill="#e6e6e6"/><path d="M9.6 4L6.4 8L9 11" fill="none" stroke="#2e2e2e" stroke-width="1.9" stroke-linejoin="round"/></symbol><symbol id="rec" viewBox="0 0 16 16"><circle cx="8" cy="8" r="3.7" fill="#e6e6e6"/></symbol><symbol id="pb_first" viewBox="0 0 16 16"><path d="M4 3.2V12.8" stroke="#e6e6e6" stroke-width="1.7"/><path d="M12.6 3.2V12.8L5.6 8Z" fill="#e6e6e6"/></symbol><symbol id="pb_prevkey" viewBox="0 0 16 16"><path d="M5.4 3.6L9.4 8L5.4 12.4L1.4 8Z" fill="#e6e6e6"/><path d="M15 3.6V12.4L10 8Z" fill="#e6e6e6"/></symbol><symbol id="pb_rev" viewBox="0 0 16 16"><path d="M12.6 2.8V13.2L3.6 8Z" fill="#e6e6e6"/></symbol><symbol id="pb_play" viewBox="0 0 16 16"><path d="M3.6 2.4V13.6L13.4 8Z" fill="#e6e6e6"/></symbol><symbol id="pb_nextkey" viewBox="0 0 16 16"><path d="M10.6 3.6L14.6 8L10.6 12.4L6.6 8Z" fill="#e6e6e6"/><path d="M1 3.6V12.4L6 8Z" fill="#e6e6e6"/></symbol><symbol id="pb_last" viewBox="0 0 16 16"><path d="M12 3.2V12.8" stroke="#e6e6e6" stroke-width="1.7"/><path d="M3.4 3.2V12.8L10.4 8Z" fill="#e6e6e6"/></symbol><symbol id="clock" viewBox="0 0 16 16"><circle cx="7.6" cy="9" r="5.2" fill="none" stroke="#dcdcdc" stroke-width="1.1"/><path d="M7.6 5.8V9.2H10M5.6 2H9.6M7.6 2V3.6M12 4L13.4 2.6" fill="none" stroke="#dcdcdc" stroke-width="1.1"/></symbol><symbol id="mouse_l" viewBox="0 0 16 16"><rect x="3.2" y="1" width="9.6" height="14" rx="3.2" fill="none" stroke="#c0c0c0" stroke-width="1.1"/><path d="M3.2 7V4.2C3.2 2.4 4.6 1 6.4 1H8V7Z" fill="#a0a0a0"/></symbol><symbol id="mouse_m" viewBox="0 0 16 16"><rect x="3.2" y="1" width="9.6" height="14" rx="3.2" fill="none" stroke="#c0c0c0" stroke-width="1.1"/><rect x="6.8" y="2.6" width="2.4" height="4.6" rx="1" fill="#b0b0b0"/></symbol><symbol id="mouse_r" viewBox="0 0 16 16"><rect x="3.2" y="1" width="9.6" height="14" rx="3.2" fill="none" stroke="#c0c0c0" stroke-width="1.1"/><path d="M12.8 7V4.2C12.8 2.4 11.4 1 9.6 1H8V7Z" fill="#a0a0a0"/></symbol></defs></svg>
<div id="root">
<div style="left:0px;top:0px;width:2560px;height:1369px;background:#181818;"></div>
<div id="v3d" style="left:1px;top:27px;width:2112.5px;height:1219px;background:#3f3f3f;border-radius:5px;overflow:hidden">
<svg style="left:0;top:0" width="2112.5" height="1219" viewBox="1 27 2112.5 1219"><defs><linearGradient id="g1" gradientUnits="userSpaceOnUse" x1="1045.8" y1="-95.4" x2="1068.8" y2="1404.4"><stop offset="0.0000" stop-color="#fff" stop-opacity="0.000"/><stop offset="0.0667" stop-color="#fff" stop-opacity="0.004"/><stop offset="0.0813" stop-color="#fff" stop-opacity="0.014"/><stop offset="0.0933" stop-color="#fff" stop-opacity="0.030"/><stop offset="0.1100" stop-color="#fff" stop-opacity="0.064"/><stop offset="0.1267" stop-color="#fff" stop-opacity="0.111"/><stop offset="0.1433" stop-color="#fff" stop-opacity="0.172"/><stop offset="0.1667" stop-color="#fff" stop-opacity="0.272"/><stop offset="0.1967" stop-color="#fff" stop-opacity="0.401"/><stop offset="0.2267" stop-color="#fff" stop-opacity="0.489"/><stop offset="0.2633" stop-color="#fff" stop-opacity="0.564"/><stop offset="0.3067" stop-color="#fff" stop-opacity="0.642"/><stop offset="0.3733" stop-color="#fff" stop-opacity="0.739"/><stop offset="0.4800" stop-color="#fff" stop-opacity="0.847"/><stop offset="0.6667" stop-color="#fff" stop-opacity="0.942"/><stop offset="1.0000" stop-color="#fff" stop-opacity="0.989"/></linearGradient><linearGradient id="g10" gradientUnits="userSpaceOnUse" x1="1045.8" y1="-95.4" x2="1068.8" y2="1404.4"><stop offset="0.0000" stop-color="#fff" stop-opacity="0.000"/><stop offset="0.0667" stop-color="#fff" stop-opacity="0.132"/><stop offset="0.0813" stop-color="#fff" stop-opacity="0.202"/><stop offset="0.0933" stop-color="#fff" stop-opacity="0.238"/><stop offset="0.1100" stop-color="#fff" stop-opacity="0.283"/><stop offset="0.1267" stop-color="#fff" stop-opacity="0.322"/><stop offset="0.1433" stop-color="#fff" stop-opacity="0.354"/><stop offset="0.1667" stop-color="#fff" stop-opacity="0.391"/><stop offset="0.1967" stop-color="#fff" stop-opacity="0.433"/><stop offset="0.2267" stop-color="#fff" stop-opacity="0.489"/><stop offset="0.2633" stop-color="#fff" stop-opacity="0.564"/><stop offset="0.3067" stop-color="#fff" stop-opacity="0.642"/><stop offset="0.3733" stop-color="#fff" stop-opacity="0.739"/><stop offset="0.4800" stop-color="#fff" stop-opacity="0.847"/><stop offset="0.6667" stop-color="#fff" stop-opacity="0.942"/><stop offset="1.0000" stop-color="#fff" stop-opacity="0.989"/></linearGradient><linearGradient id="gax" gradientUnits="userSpaceOnUse" x1="1045.8" y1="-95.4" x2="1068.8" y2="1404.4"><stop offset="0.0000" stop-color="#fff" stop-opacity="0.000"/><stop offset="0.0667" stop-color="#fff" stop-opacity="0.107"/><stop offset="0.0813" stop-color="#fff" stop-opacity="0.236"/><stop offset="0.0933" stop-color="#fff" stop-opacity="0.333"/><stop offset="0.1100" stop-color="#fff" stop-opacity="0.396"/><stop offset="0.1267" stop-color="#fff" stop-opacity="0.443"/><stop offset="0.1433" stop-color="#fff" stop-opacity="0.488"/><stop offset="0.1667" stop-color="#fff" stop-opacity="0.546"/><stop offset="0.1967" stop-color="#fff" stop-opacity="0.613"/><stop offset="0.2267" stop-color="#fff" stop-opacity="0.672"/><stop offset="0.2633" stop-color="#fff" stop-opacity="0.734"/><stop offset="0.3067" stop-color="#fff" stop-opacity="0.796"/><stop offset="0.3733" stop-color="#fff" stop-opacity="0.869"/><stop offset="0.4800" stop-color="#fff" stop-opacity="0.947"/><stop offset="0.6667" stop-color="#fff" stop-opacity="1.000"/><stop offset="1.0000" stop-color="#fff" stop-opacity="1.000"/></linearGradient>
<mask id="m1" maskUnits="userSpaceOnUse" x="0" y="0" width="2120" height="1260"><rect x="0" y="0" width="2120" height="1260" fill="url(#g1)"/></mask>
<mask id="m10" maskUnits="userSpaceOnUse" x="0" y="0" width="2120" height="1260"><rect x="0" y="0" width="2120" height="1260" fill="url(#g10)"/></mask>
<mask id="max" maskUnits="userSpaceOnUse" x="0" y="0" width="2120" height="1260"><rect x="0" y="0" width="2120" height="1260" fill="url(#gax)"/></mask>
<clipPath id="cfront"><polygon points="952.2,620 1013.6,688.5 1168.2,653.9 1166.6,726.6 1015.9,763.4 955.7,690"/></clipPath>
</defs>
<g id="gr" fill="none" stroke="#595959" stroke-width="1.25">
<path id="gp1" mask="url(#m1)" stroke-opacity=".78" d="M-2 41.1L420 24M-2 42L438.9 24M-2 42.8L457.9 24M-2 43.7L477.1 24M-2 44.6L496.3 24M-2 46.4L535.1 24M-2 47.3L554.6 24M-2 48.2L574.3 24M-2 49.2L594 24M-2 50.1L613.9 24M-2 51.1L633.9 24M-2 52.1L653.9 24M-2 53.1L674.1 24M-2 54.2L694.4 24M-2 56.3L735.4 24M-2 57.3L756 24M-2 58.4L776.8 24M-2 59.5L797.6 24M-2 60.6L818.6 24M-2 61.8L839.7 24M-2 63L860.9 24M-2 64.1L882.3 24M-2 65.3L903.7 24M-2 67.8L947 24M-2 69.1L968.8 24M-2 70.4L990.8 24M-2 71.7L1012.9 24M-2 73L1035.1 24M-2 74.4L1057.4 24M-2 75.7L1079.8 24M-2 77.1L1102.4 24M-2 78.6L1125.2 24M-2 81.5L1171 24M-2 83L1194.1 24M-2 84.6L1217.4 24M-2 86.1L1240.7 24M-2 87.7L1264.3 24M-2 89.4L1287.9 24M-2 91L1311.7 24M-2 92.7L1335.7 24M-2 94.5L1359.8 24M-2 98L1408.4 24M-2 99.9L1432.9 24M-2 101.8L1457.6 24M-2 103.7L1482.4 24M-2 105.6L1507.4 24M-2 107.6L1532.5 24M-2 109.7L1557.8 24M-2 111.8L1583.3 24M-2 113.9L1608.9 24M-2 118.3L1660.5 24M-2 120.6L1686.6 24M-2 123L1712.8 24M-2 125.4L1739.2 24M-2 127.8L1765.8 24M-2 130.3L1792.5 24M-2 132.9L1819.4 24M-2 135.6L1846.5 24M-2 138.3L1873.7 24M-2 143.9L1928.7 24M-2 146.8L1956.5 24M-2 149.8L1984.4 24M-2 152.9L2012.6 24M-2 156.1L2040.9 24M-2 159.3L2069.4 24M-2 162.7L2098 24M-2 166.1L2116 24.7M-2 169.6L2116 26.7M-2 177L2116 30.8M-2 180.9L2116 33M-2 184.9L2116 35.2M-2 189L2116 37.5M-2 193.2L2116 39.8M-2 197.6L2116 42.2M-2 202.1L2116 44.8M-2 206.8L2116 47.4M-2 211.6L2116 50M-2 221.7L2116 55.7M-2 227.1L2116 58.7M-2 232.6L2116 61.7M-2 238.4L2116 64.9M-2 244.3L2116 68.2M-2 250.5L2116 71.7M-2 256.9L2116 75.2M-2 263.6L2116 79M-2 270.5L2116 82.8M-2 285.3L2116 91.1M18.2 40.3L-2 48.6M-2 293.2L2116 95.4M33.8 39.7L-2 55.1M-2 301.4L2116 100M49.3 39L-2 62.2M-2 310L2116 104.8M64.6 38.4L-2 70.2M-2 319L2116 109.8M79.9 37.8L-2 79.1M-2 328.4L2116 115M95 37.2L-2 89.2M-2 338.2L2116 120.5M110.1 36.6L-2 100.6M-2 348.6L2116 126.2M125.1 36L-2 113.7M-2 359.4L2116 132.3M139.9 35.4L-2 128.8M-2 382.9L2116 145.4M169.4 34.2L-2 167.6M-2 395.7L2116 152.4M184 33.6L-2 192.9M-2 409.1L2116 159.9M198.5 33L-2 224M-2 423.3L2116 167.8M212.9 32.4L-2 263.1M-2 438.4L2116 176.2M227.2 31.8L-2 313.8M-2 454.4L2116 185.1M241.5 31.2L-2 382.1M-2 471.4L2116 194.6M255.6 30.7L-2 479.2M-2 489.6L2116 204.7M269.6 30.1L-2 628M-2 508.9L2116 215.5M283.6 29.5L-2 884.8M-2 552L2116 239.4M311.3 28.4L199.3 1249M-2 575.9L2116 252.7M325 27.9L361.7 1249M-2 601.8L2116 267.1M338.6 27.3L524.6 1249M-2 629.7L2116 282.7M352.2 26.8L688.2 1249M-2 660.1L2116 299.6M365.6 26.2L852.4 1249M-2 693.2L2116 318M379 25.7L1017.2 1249M-2 729.4L2116 338.1M392.3 25.1L1182.7 1249M-2 769.1L2116 360.2M405.5 24.6L1348.7 1249M-2 813L2116 384.6M418.6 24.1L1515.4 1249M-2 915.8L2116 441.8M445.8 24L1850.7 1249M-2 976.7L2116 475.7M459.5 24L2019.3 1249M-2 1045.5L2116 514M473.3 24L2116 1197.2M-2 1123.9L2116 557.6M487.1 24L2116 1090.3M-2 1214L2116 607.7M500.9 24L2116 999.6M224.2 1249L2116 666M514.8 24L2116 921.5M575.5 1249L2116 734.5M528.8 24L2116 853.8M929.7 1249L2116 816.2M542.8 24L2116 794.3M1286.7 1249L2116 915.5M556.8 24L2116 741.8M2009.6 1249L2116 1195M585.1 24L2116 653.1M599.4 24L2116 615.3M613.7 24L2116 581.1M628 24L2116 549.9M642.4 24L2116 521.5M656.9 24L2116 495.4M671.4 24L2116 471.3M685.9 24L2116 449.1M700.6 24L2116 428.5M730 24L2116 391.5M744.8 24L2116 374.9M759.6 24L2116 359.3M774.6 24L2116 344.7M789.5 24L2116 331M804.6 24L2116 318.1M819.7 24L2116 305.9M834.8 24L2116 294.3M850.1 24L2116 283.4M880.7 24L2116 263.3M896.1 24L2116 254M911.5 24L2116 245.1M927.1 24L2116 236.7M942.7 24L2116 228.6M958.3 24L2116 220.9M974 24L2116 213.6M989.8 24L2116 206.5M1005.7 24L2116 199.8M1037.6 24L2116 187.1M1053.6 24L2116 181.2M1069.7 24L2116 175.5M1085.9 24L2116 170M1102.1 24L2116 164.7M1118.5 24L2116 159.6M1134.8 24L2116 154.7M1151.3 24L2116 149.9M1167.8 24L2116 145.3M1201 24L2116 136.7M1217.8 24L2116 132.5M1234.6 24L2116 128.6M1251.4 24L2116 124.7M1268.4 24L2116 121M1285.4 24L2116 117.3M1302.5 24L2116 113.8M1319.6 24L2116 110.4M1336.9 24L2116 107.1M1371.6 24L2116 100.8M1389 24L2116 97.8M1406.5 24L2116 94.8M1424.1 24L2116 92M1441.8 24L2116 89.2M1459.6 24L2116 86.5M1477.4 24L2116 83.8M1495.3 24L2116 81.3M1513.3 24L2116 78.8M1549.5 24L2116 74M1567.8 24L2116 71.6M1586.1 24L2116 69.4M1604.5 24L2116 67.2M1622.9 24L2116 65M1641.5 24L2116 62.9M1660.1 24L2116 60.9M1678.9 24L2116 58.9M1697.7 24L2116 56.9M1735.5 24L2116 53.1M1754.6 24L2116 51.3M1773.7 24L2116 49.5M1793 24L2116 47.8M1812.3 24L2116 46.1M1831.7 24L2116 44.4M1851.2 24L2116 42.8M1870.8 24L2116 41.1M1890.4 24L2116 39.6M1930 24L2116 36.5M1950 24L2116 35M1970 24L2116 33.6M1990.1 24L2116 32.2M2010.4 24L2116 30.8M2030.7 24L2116 29.4M2051.1 24L2116 28.1M2071.6 24L2116 26.7M2092.2 24L2116 25.5"/>
<path id="gp10" mask="url(#m10)" stroke-opacity=".8" d="M-2 45.5L515.6 24M-2 55.2L714.8 24M-2 66.6L925.3 24M-2 80L1148 24M-2 96.2L1384 24M-2 116.1L1634.6 24M-2 141L1901.1 24M-2 173.3L2116 28.7M-2 216.6L2116 52.8M-2 277.8L2116 86.9M2.6 40.9L-2 42.7M-2 370.9L2116 138.7M154.7 34.8L-2 146.6M-2 529.7L2116 227M297.5 29L37.5 1249M1646.7 1249L2116 1038.5M571 24L2116 695M715.2 24L2116 409.4M865.3 24L2116 273.1M1021.6 24L2116 193.3M1184.4 24L2116 140.9M1354.2 24L2116 103.9M1531.4 24L2116 76.3M1716.5 24L2116 55M1910.2 24L2116 38M2112.9 24L2116 24.2"/>
</g>
<g mask="url(#max)" fill="none" stroke-width="1.7"><path stroke="#a83e53" d="M432.2 24L1682.7 1249"/><path stroke="#6a9829" stroke-width="1.55" d="M-2 861.6L2116 411.6"/></g>
<g fill="none" stroke="#0c0c0c" stroke-width="1"><line x1="1354.8" y1="183.8" x2="1310.6" y2="777.6" stroke-opacity=".4"/><circle cx="1354.8" cy="180.8" r="12"/><circle cx="1354.8" cy="180.8" r="9.3" stroke-dasharray="3.2 4.1" stroke-dashoffset="1"/><path d="M1354.8 177.8l3 3l-3 3l-3 -3z"/><circle cx="1310.6" cy="777.6" r="1.2" stroke-opacity=".7"/></g>
<path d="M487.4 558.6L631.9 579.3L619.4 676.3L475.7 652.4ZM376.3 607.8L487.4 558.6M376.3 607.8L631.9 579.3M376.3 607.8L619.4 676.3M376.3 607.8L475.7 652.4" fill="none" stroke="#000" stroke-width="1" stroke-opacity=".9"/>
<polygon points="510.5,552.8 566.4,501 609.8,566.7" fill="#000"/>
<g stroke="#e38a2a" stroke-width="1" stroke-linejoin="round">
<polygon points="948.5,546.5 1095.8,519.6 1170,577.4 1011.2,609.6" fill="#9d938e" />
<polygon points="948.5,546.5 1011.2,609.6 1015.9,763.4 955.7,690" fill="#94897f" />
<polygon points="1011.2,609.6 1170,577.4 1166.6,726.6 1015.9,763.4" fill="#86786f" />
</g>
<g clip-path="url(#cfront)" fill="none" stroke="#555" stroke-opacity=".28" stroke-width="1.1"><path d="M-2 63L860.9 24M-2 64.1L882.3 24M-2 65.3L903.7 24M-2 67.8L947 24M-2 69.1L968.8 24M-2 70.4L990.8 24M-2 71.7L1012.9 24M-2 73L1035.1 24M-2 74.4L1057.4 24M-2 75.7L1079.8 24M-2 77.1L1102.4 24M-2 78.6L1125.2 24M-2 81.5L1171 24M-2 83L1194.1 24M-2 84.6L1217.4 24M-2 86.1L1240.7 24M-2 87.7L1264.3 24M-2 89.4L1287.9 24M-2 91L1311.7 24M-2 92.7L1335.7 24M-2 94.5L1359.8 24M-2 98L1408.4 24M-2 99.9L1432.9 24M-2 101.8L1457.6 24M-2 103.7L1482.4 24M-2 105.6L1507.4 24M-2 107.6L1532.5 24M-2 109.7L1557.8 24M-2 111.8L1583.3 24M-2 113.9L1608.9 24M-2 118.3L1660.5 24M-2 120.6L1686.6 24M-2 123L1712.8 24M-2 125.4L1739.2 24M-2 127.8L1765.8 24M-2 130.3L1792.5 24M-2 132.9L1819.4 24M-2 135.6L1846.5 24M-2 138.3L1873.7 24M-2 143.9L1928.7 24M-2 146.8L1956.5 24M-2 149.8L1984.4 24M-2 152.9L2012.6 24M-2 156.1L2040.9 24M-2 159.3L2069.4 24M-2 162.7L2098 24M-2 166.1L2116 24.7M-2 169.6L2116 26.7M-2 177L2116 30.8M-2 180.9L2116 33M-2 184.9L2116 35.2M-2 189L2116 37.5M-2 193.2L2116 39.8M-2 197.6L2116 42.2M-2 202.1L2116 44.8M-2 206.8L2116 47.4M-2 211.6L2116 50M-2 221.7L2116 55.7M-2 227.1L2116 58.7M-2 232.6L2116 61.7M-2 238.4L2116 64.9M-2 244.3L2116 68.2M-2 250.5L2116 71.7M-2 256.9L2116 75.2M-2 263.6L2116 79M-2 270.5L2116 82.8M-2 285.3L2116 91.1M-2 293.2L2116 95.4M-2 301.4L2116 100M-2 310L2116 104.8M-2 319L2116 109.8M-2 328.4L2116 115M-2 338.2L2116 120.5M-2 348.6L2116 126.2M-2 359.4L2116 132.3M-2 382.9L2116 145.4M-2 395.7L2116 152.4M-2 409.1L2116 159.9M-2 423.3L2116 167.8M-2 438.4L2116 176.2M-2 454.4L2116 185.1M-2 471.4L2116 194.6M-2 489.6L2116 204.7M-2 508.9L2116 215.5M-2 552L2116 239.4M-2 575.9L2116 252.7M-2 601.8L2116 267.1M-2 629.7L2116 282.7M-2 660.1L2116 299.6M365.6 26.2L852.4 1249M-2 693.2L2116 318M379 25.7L1017.2 1249M-2 729.4L2116 338.1M392.3 25.1L1182.7 1249M-2 769.1L2116 360.2M405.5 24.6L1348.7 1249M-2 813L2116 384.6M418.6 24.1L1515.4 1249M-2 915.8L2116 441.8M445.8 24L1850.7 1249M-2 976.7L2116 475.7M459.5 24L2019.3 1249M-2 1045.5L2116 514M473.3 24L2116 1197.2M-2 1123.9L2116 557.6M487.1 24L2116 1090.3M-2 1214L2116 607.7M500.9 24L2116 999.6M224.2 1249L2116 666M514.8 24L2116 921.5M575.5 1249L2116 734.5M528.8 24L2116 853.8M929.7 1249L2116 816.2M542.8 24L2116 794.3M556.8 24L2116 741.8M585.1 24L2116 653.1M599.4 24L2116 615.3M613.7 24L2116 581.1M628 24L2116 549.9M642.4 24L2116 521.5M656.9 24L2116 495.4M671.4 24L2116 471.3M685.9 24L2116 449.1M700.6 24L2116 428.5M730 24L2116 391.5M744.8 24L2116 374.9M759.6 24L2116 359.3M774.6 24L2116 344.7M789.5 24L2116 331M804.6 24L2116 318.1M819.7 24L2116 305.9M834.8 24L2116 294.3M850.1 24L2116 283.4M880.7 24L2116 263.3M896.1 24L2116 254M911.5 24L2116 245.1M927.1 24L2116 236.7M942.7 24L2116 228.6M958.3 24L2116 220.9M974 24L2116 213.6M989.8 24L2116 206.5M1005.7 24L2116 199.8M1037.6 24L2116 187.1M1053.6 24L2116 181.2M1069.7 24L2116 175.5M1085.9 24L2116 170M1102.1 24L2116 164.7M1118.5 24L2116 159.6M1134.8 24L2116 154.7M1151.3 24L2116 149.9M1167.8 24L2116 145.3M1201 24L2116 136.7M1217.8 24L2116 132.5M1234.6 24L2116 128.6"/></g>
<g fill="none" stroke-width="1.7"><path stroke="#ad4257" d="M1092.5 670.9L1147.6 724.8"/><path stroke="#6b9a27" d="M981.5 652.7L869.7 676.4"/></g>
<g fill="#ff8a1a"><rect x="946.8" y="544.8" width="3.4" height="3.4" rx=".8"/><rect x="1094.1" y="517.9" width="3.4" height="3.4" rx=".8"/><rect x="1168.3" y="575.7" width="3.4" height="3.4" rx=".8"/><rect x="1009.5" y="607.9" width="3.4" height="3.4" rx=".8"/><rect x="954" y="688.3" width="3.4" height="3.4" rx=".8"/><rect x="1014.2" y="761.7" width="3.4" height="3.4" rx=".8"/><rect x="1164.9" y="724.9" width="3.4" height="3.4" rx=".8"/></g>
<path d="M1060.8 639.8L1065.4 644.3M1054.1 633.3L1049.7 628.9M1064.9 634.9L1075.3 632.7M1050 638.1L1039.5 640.3M1057.3 627.4L1057.2 618.9M1057.6 645.6L1057.7 654" stroke="#111" stroke-width="1.2" fill="none"/>
<circle cx="1057.5" cy="636.5" r="10.4" fill="none" stroke="#fff" stroke-width="1.6"/>
<circle cx="1057.5" cy="636.5" r="10.4" fill="none" stroke="#e8312f" stroke-width="1.6" stroke-dasharray="4.08 4.08"/>
<circle cx="1057.5" cy="636.5" r="2.6" fill="#ff9a2a" stroke="#b06010" stroke-width=".6"/></svg>
</div>
<div style="left:1px;top:27px;width:2112.5px;height:27px;background:rgba(48,48,48,.47);border-radius:5px 5px 0 0;"></div>
<div style="left:1px;top:54px;width:111px;height:26px;background:rgba(48,48,48,.47);border-radius:0 0 5px 0;"></div>
<div style="left:1933px;top:54px;width:180.5px;height:26px;background:rgba(48,48,48,.47);border-radius:0 0 0 5px;"></div>
<div style="left:10px;top:30px;width:30px;height:18px;background:#272727;border-radius:4px;"></div>
<svg style="left:12px;top:31px;" width="16" height="16" viewBox="0 0 16 16"><use href="#ed_view3d"/></svg>
<svg style="left:27.5px;top:33px;" width="13" height="13" viewBox="0 0 16 16"><use href="#chev"/></svg>
<div style="left:47px;top:30px;width:108px;height:18px;background:#272727;border-radius:4px;"></div>
<svg style="left:50px;top:31px;" width="16" height="16" viewBox="0 0 16 16"><use href="#editmode"/></svg>
<span class="t" style="left:72.50px;top:31.13px;letter-spacing:0.141px;">Edit Mode</span>
<svg style="left:142px;top:33px;" width="13" height="13" viewBox="0 0 16 16"><use href="#chev"/></svg>
<div style="left:162px;top:30px;width:19px;height:18px;background:#4772b3;border-radius:4px 0 0 4px;"></div>
<div style="left:181.6px;top:30px;width:18.8px;height:18px;background:#545454;border-radius:0;"></div>
<div style="left:201px;top:30px;width:19px;height:18px;background:#545454;border-radius:0 4px 4px 0;"></div>
<svg style="left:162.5px;top:30px;" width="18" height="18" viewBox="0 0 16 16"><use href="#vertsel"/></svg>
<svg style="left:182px;top:30px;" width="18" height="18" viewBox="0 0 16 16"><use href="#edgesel"/></svg>
<svg style="left:201.5px;top:30px;" width="18" height="18" viewBox="0 0 16 16"><use href="#facesel"/></svg>
<span class="t" style="left:233.00px;top:31.13px;letter-spacing:-0.084px;color:#e0e0e0;">View</span>
<span class="t" style="left:273.00px;top:31.13px;letter-spacing:-0.040px;color:#e0e0e0;">Select</span>
<span class="t" style="left:320.00px;top:31.13px;letter-spacing:-0.047px;color:#e0e0e0;">Add</span>
<span class="t" style="left:356.00px;top:31.13px;letter-spacing:0.033px;color:#e0e0e0;">Mesh</span>
<span class="t" style="left:400.00px;top:31.13px;letter-spacing:-0.048px;color:#e0e0e0;">Vertex</span>
<span class="t" style="left:448.00px;top:31.13px;letter-spacing:-0.023px;color:#e0e0e0;">Edge</span>
<span class="t" style="left:490.00px;top:31.13px;letter-spacing:-0.447px;color:#e0e0e0;">Face</span>
<span class="t" style="left:529.00px;top:31.13px;letter-spacing:-0.557px;color:#e0e0e0;">UV</span>
<div style="left:932px;top:30px;width:78px;height:18px;background:#272727;border-radius:4px;"></div>
<svg style="left:935px;top:31px;" width="16" height="16" viewBox="0 0 16 16"><use href="#orient"/></svg>
<span class="t" style="left:957.50px;top:31.13px;letter-spacing:-0.055px;">Global</span>
<svg style="left:997.5px;top:33px;" width="13" height="13" viewBox="0 0 16 16"><use href="#chev"/></svg>
<div style="left:1017px;top:30px;width:30px;height:18px;background:#272727;border-radius:4px;"></div>
<svg style="left:1019px;top:31px;" width="16" height="16" viewBox="0 0 16 16"><use href="#pivot"/></svg>
<svg style="left:1034.5px;top:33px;" width="13" height="13" viewBox="0 0 16 16"><use href="#chev"/></svg>
<div style="left:1053.8px;top:30px;width:18.4px;height:18px;background:#545454;border-radius:4px 0 0 4px;"></div>
<svg style="left:1054px;top:30px;" width="18" height="18" viewBox="0 0 16 16"><use href="#magnet"/></svg>
<div style="left:1072.8px;top:30px;width:31.2px;height:18px;background:#272727;border-radius:0 4px 4px 0;"></div>
<svg style="left:1075px;top:31px;" width="16" height="16" viewBox="0 0 16 16"><use href="#snapinc"/></svg>
<svg style="left:1091.5px;top:33px;" width="13" height="13" viewBox="0 0 16 16"><use href="#chev"/></svg>
<div style="left:1110.8px;top:30px;width:18.2px;height:18px;background:#545454;border-radius:4px 0 0 4px;"></div>
<svg style="left:1112px;top:31px;" width="16" height="16" viewBox="0 0 16 16"><use href="#propedit"/></svg>
<div style="left:1129.6px;top:30px;width:31.6px;height:18px;background:rgba(39,39,39,.75);border-radius:0 4px 4px 0;"></div>
<svg style="left:1132px;top:31px;opacity:.75" width="16" height="16" viewBox="0 0 16 16"><use href="#falloff"/></svg>
<svg style="left:1148.5px;top:33px;opacity:.4" width="13" height="13" viewBox="0 0 16 16"><use href="#chev"/></svg>
<div style="left:1827.2px;top:30px;width:30px;height:18px;background:#272727;border-radius:4px;"></div>
<svg style="left:1829.5px;top:31px;" width="16" height="16" viewBox="0 0 16 16"><use href="#selectab"/></svg>
<svg style="left:1844.5px;top:33px;" width="13" height="13" viewBox="0 0 16 16"><use href="#chev"/></svg>
<div style="left:1864.2px;top:30px;width:17.5px;height:18px;background:#4772b3;border-radius:4px 0 0 4px;"></div>
<svg style="left:1865px;top:31px;" width="16" height="16" viewBox="0 0 16 16"><use href="#gizmo"/></svg>
<div style="left:1882.3px;top:30px;width:19.7px;height:18px;background:#272727;border-radius:0 4px 4px 0;"></div>
<svg style="left:1885.5px;top:33px;" width="13" height="13" viewBox="0 0 16 16"><use href="#chev"/></svg>
<div style="left:1909px;top:30px;width:17.8px;height:18px;background:#4772b3;border-radius:4px 0 0 4px;"></div>
<svg style="left:1910px;top:31px;" width="16" height="16" viewBox="0 0 16 16"><use href="#overlay"/></svg>
<div style="left:1927.4px;top:30px;width:19.6px;height:18px;background:#272727;border-radius:0;"></div>
<svg style="left:1930.5px;top:33px;" width="13" height="13" viewBox="0 0 16 16"><use href="#chev"/></svg>
<div style="left:1947.6px;top:30px;width:31.4px;height:18px;background:#272727;border-radius:0 4px 4px 0;"></div>
<svg style="left:1950px;top:31px;" width="16" height="16" viewBox="0 0 16 16"><use href="#editmode"/></svg>
<svg style="left:1966.5px;top:33px;" width="13" height="13" viewBox="0 0 16 16"><use href="#chev"/></svg>
<div style="left:1986.2px;top:30px;width:17.8px;height:18px;background:#545454;border-radius:4px;"></div>
<svg style="left:1987px;top:31px;" width="16" height="16" viewBox="0 0 16 16"><use href="#xray"/></svg>
<div style="left:2011px;top:30px;width:18.4px;height:18px;background:#545454;border-radius:4px 0 0 4px;"></div>
<div style="left:2030px;top:30px;width:18.2px;height:18px;background:#4772b3;border-radius:0;"></div>
<div style="left:2048.8px;top:30px;width:18.2px;height:18px;background:#545454;border-radius:0;"></div>
<div style="left:2067.6px;top:30px;width:18.4px;height:18px;background:#545454;border-radius:0;"></div>
<div style="left:2086.6px;top:30px;width:19.6px;height:18px;background:#272727;border-radius:0 4px 4px 0;"></div>
<svg style="left:2012.3px;top:31px;" width="16" height="16" viewBox="0 0 16 16"><use href="#sh_wire"/></svg>
<svg style="left:2031px;top:31px;" width="16" height="16" viewBox="0 0 16 16"><use href="#sh_solid"/></svg>
<svg style="left:2050px;top:31px;" width="16" height="16" viewBox="0 0 16 16"><use href="#sh_mat"/></svg>
<svg style="left:2069px;top:31px;" width="16" height="16" viewBox="0 0 16 16"><use href="#sh_rend"/></svg>
<svg style="left:2090px;top:33px;" width="13" height="13" viewBox="0 0 16 16"><use href="#chev"/></svg>
<div style="left:9.2px;top:56px;width:18.2px;height:18px;background:#4772b3;border-radius:4px 0 0 4px;"></div>
<svg style="left:9.05px;top:55.75px;" width="18.5" height="18.5" viewBox="0 0 16 16"><use href="#sm_new"/></svg>
<div style="left:28px;top:56px;width:18.1px;height:18px;background:#545454;border-radius:0;"></div>
<svg style="left:27.8px;top:55.75px;" width="18.5" height="18.5" viewBox="0 0 16 16"><use href="#sm_ext"/></svg>
<div style="left:46.7px;top:56px;width:18.2px;height:18px;background:#545454;border-radius:0;"></div>
<svg style="left:46.55px;top:55.75px;" width="18.5" height="18.5" viewBox="0 0 16 16"><use href="#sm_sub"/></svg>
<div style="left:65.5px;top:56px;width:18.2px;height:18px;background:#545454;border-radius:0;"></div>
<svg style="left:65.35px;top:55.75px;" width="18.5" height="18.5" viewBox="0 0 16 16"><use href="#sm_inv"/></svg>
<div style="left:84.3px;top:56px;width:18.1px;height:18px;background:#545454;border-radius:0 4px 4px 0;"></div>
<svg style="left:84.1px;top:55.75px;" width="18.5" height="18.5" viewBox="0 0 16 16"><use href="#sm_and"/></svg>
<svg style="left:1942.5px;top:57px;opacity:.8" width="16" height="16" viewBox="0 0 16 16"><use href="#mirror"/></svg>
<div style="left:1962.3px;top:56.2px;width:15.6px;height:17.8px;background:#545454;border-radius:4px 0 0 4px;"></div>
<span class="t" style="left:1966.29px;top:57.33px;letter-spacing:-0.116px;">X</span>
<div style="left:1978.5px;top:56.2px;width:15.6px;height:17.8px;background:#545454;border-radius:0;"></div>
<span class="t" style="left:1982.49px;top:57.33px;letter-spacing:-0.116px;">Y</span>
<div style="left:1994.7px;top:56.2px;width:15.6px;height:17.8px;background:#545454;border-radius:0 4px 4px 0;"></div>
<span class="t" style="left:1999.01px;top:57.33px;letter-spacing:-0.106px;">Z</span>
<div style="left:2018.2px;top:56.2px;width:17.6px;height:17.8px;background:#545454;border-radius:4px;"></div>
<svg style="left:2019px;top:57px;" width="16" height="16" viewBox="0 0 16 16"><use href="#automerge"/></svg>
<div style="left:2043.2px;top:56.2px;width:63.6px;height:17.8px;background:#272727;border-radius:4px;"></div>
<span class="t" style="left:2050.00px;top:57.33px;letter-spacing:0.060px;">Options</span>
<svg style="left:2092.5px;top:59px;" width="13" height="13" viewBox="0 0 16 16"><use href="#chev"/></svg>
<span class="t sh" style="left:65.00px;top:85.43px;letter-spacing:-0.020px;color:#fff;">User Perspective</span>
<span class="t sh" style="left:65.00px;top:104.13px;letter-spacing:0.108px;color:#fff;">(1) Cube</span>
<div style="left:8.9px;top:86.7px;width:37.8px;height:33.6px;background:#4772b3;border-radius:4px 4px 0 0;"></div>
<svg style="left:13.8px;top:89.5px" width="28" height="28" viewBox="0 0 28 28"><use href="#t_select"/></svg>
<svg style="left:41.2px;top:114.1px" width="4" height="4" viewBox="0 0 4 4"><path d="M4 0V4H0Z" fill="#9a9a9a"/></svg>
<div style="left:8.9px;top:120.9px;width:37.8px;height:33.8px;background:rgba(38,38,38,.96);border-radius:0 0 4px 4px;"></div>
<svg style="left:13.8px;top:123.8px" width="28" height="28" viewBox="0 0 28 28"><use href="#t_cursor"/></svg>
<div style="left:8.9px;top:162px;width:37.8px;height:33.4px;background:rgba(38,38,38,.96);border-radius:4px 4px 0 0;"></div>
<svg style="left:13.8px;top:164.7px" width="28" height="28" viewBox="0 0 28 28"><use href="#t_move"/></svg>
<div style="left:8.9px;top:196.2px;width:37.8px;height:33.8px;background:rgba(38,38,38,.96);border-radius:0;"></div>
<svg style="left:13.8px;top:199.1px" width="28" height="28" viewBox="0 0 28 28"><use href="#t_rotate"/></svg>
<div style="left:8.9px;top:230.8px;width:37.8px;height:34.2px;background:rgba(38,38,38,.96);border-radius:0;"></div>
<svg style="left:13.8px;top:233.9px" width="28" height="28" viewBox="0 0 28 28"><use href="#t_scale"/></svg>
<svg style="left:41.2px;top:258.8px" width="4" height="4" viewBox="0 0 4 4"><path d="M4 0V4H0Z" fill="#9a9a9a"/></svg>
<div style="left:8.9px;top:265.8px;width:37.8px;height:34.1px;background:rgba(38,38,38,.96);border-radius:0 0 4px 4px;"></div>
<svg style="left:13.8px;top:268.85px" width="28" height="28" viewBox="0 0 28 28"><use href="#t_transform"/></svg>
<div style="left:8.9px;top:306.6px;width:37.8px;height:34px;background:rgba(38,38,38,.96);border-radius:4px 4px 0 0;"></div>
<svg style="left:13.8px;top:309.6px" width="28" height="28" viewBox="0 0 28 28"><use href="#t_annotate"/></svg>
<svg style="left:41.2px;top:334.4px" width="4" height="4" viewBox="0 0 4 4"><path d="M4 0V4H0Z" fill="#9a9a9a"/></svg>
<div style="left:8.9px;top:341.2px;width:37.8px;height:34.1px;background:rgba(38,38,38,.96);border-radius:0 0 4px 4px;"></div>
<svg style="left:13.8px;top:344.25px" width="28" height="28" viewBox="0 0 28 28"><use href="#t_measure"/></svg>
<div style="left:8.9px;top:382px;width:37.8px;height:33px;background:rgba(38,38,38,.96);border-radius:4px;"></div>
<svg style="left:13.8px;top:384.5px" width="28" height="28" viewBox="0 0 28 28"><use href="#t_addcube"/></svg>
<svg style="left:41.2px;top:408.8px" width="4" height="4" viewBox="0 0 4 4"><path d="M4 0V4H0Z" fill="#9a9a9a"/></svg>
<div style="left:8.9px;top:422px;width:37.8px;height:33px;background:rgba(38,38,38,.96);border-radius:4px 4px 0 0;"></div>
<svg style="left:13.8px;top:424.5px" width="28" height="28" viewBox="0 0 28 28"><use href="#t_extrude"/></svg>
<svg style="left:41.2px;top:448.8px" width="4" height="4" viewBox="0 0 4 4"><path d="M4 0V4H0Z" fill="#9a9a9a"/></svg>
<div style="left:8.9px;top:455.6px;width:37.8px;height:34.4px;background:rgba(38,38,38,.96);border-radius:0;"></div>
<svg style="left:13.8px;top:458.8px" width="28" height="28" viewBox="0 0 28 28"><use href="#t_inset"/></svg>
<div style="left:8.9px;top:490.6px;width:37.8px;height:34.4px;background:rgba(38,38,38,.96);border-radius:0;"></div>
<svg style="left:13.8px;top:493.8px" width="28" height="28" viewBox="0 0 28 28"><use href="#t_bevel"/></svg>
<div style="left:8.9px;top:525.6px;width:37.8px;height:34.4px;background:rgba(38,38,38,.96);border-radius:0;"></div>
<svg style="left:13.8px;top:528.8px" width="28" height="28" viewBox="0 0 28 28"><use href="#t_loopcut"/></svg>
<svg style="left:41.2px;top:553.8px" width="4" height="4" viewBox="0 0 4 4"><path d="M4 0V4H0Z" fill="#9a9a9a"/></svg>
<div style="left:8.9px;top:560.6px;width:37.8px;height:34.4px;background:rgba(38,38,38,.96);border-radius:0;"></div>
<svg style="left:13.8px;top:563.8px" width="28" height="28" viewBox="0 0 28 28"><use href="#t_knife"/></svg>
<svg style="left:41.2px;top:588.8px" width="4" height="4" viewBox="0 0 4 4"><path d="M4 0V4H0Z" fill="#9a9a9a"/></svg>
<div style="left:8.9px;top:595.6px;width:37.8px;height:34.4px;background:rgba(38,38,38,.96);border-radius:0;"></div>
<svg style="left:13.8px;top:598.8px" width="28" height="28" viewBox="0 0 28 28"><use href="#t_polybuild"/></svg>
<div style="left:8.9px;top:630.6px;width:37.8px;height:34.8px;background:rgba(38,38,38,.96);border-radius:0;"></div>
<svg style="left:13.8px;top:634px" width="28" height="28" viewBox="0 0 28 28"><use href="#t_spin"/></svg>
<svg style="left:41.2px;top:659.2px" width="4" height="4" viewBox="0 0 4 4"><path d="M4 0V4H0Z" fill="#9a9a9a"/></svg>
<div style="left:8.9px;top:666px;width:37.8px;height:34px;background:rgba(38,38,38,.96);border-radius:0;"></div>
<svg style="left:13.8px;top:669px" width="28" height="28" viewBox="0 0 28 28"><use href="#t_smooth"/></svg>
<svg style="left:41.2px;top:693.8px" width="4" height="4" viewBox="0 0 4 4"><path d="M4 0V4H0Z" fill="#9a9a9a"/></svg>
<div style="left:8.9px;top:700.6px;width:37.8px;height:34.4px;background:rgba(38,38,38,.96);border-radius:0;"></div>
<svg style="left:13.8px;top:703.8px" width="28" height="28" viewBox="0 0 28 28"><use href="#t_edgeslide"/></svg>
<svg style="left:41.2px;top:728.8px" width="4" height="4" viewBox="0 0 4 4"><path d="M4 0V4H0Z" fill="#9a9a9a"/></svg>
<div style="left:8.9px;top:735.6px;width:37.8px;height:34.4px;background:rgba(38,38,38,.96);border-radius:0;"></div>
<svg style="left:13.8px;top:738.8px" width="28" height="28" viewBox="0 0 28 28"><use href="#t_shrink"/></svg>
<svg style="left:41.2px;top:763.8px" width="4" height="4" viewBox="0 0 4 4"><path d="M4 0V4H0Z" fill="#9a9a9a"/></svg>
<div style="left:8.9px;top:770.6px;width:37.8px;height:34.4px;background:rgba(38,38,38,.96);border-radius:0;"></div>
<svg style="left:13.8px;top:773.8px" width="28" height="28" viewBox="0 0 28 28"><use href="#t_shear"/></svg>
<svg style="left:41.2px;top:798.8px" width="4" height="4" viewBox="0 0 4 4"><path d="M4 0V4H0Z" fill="#9a9a9a"/></svg>
<div style="left:8.9px;top:805.6px;width:37.8px;height:34.4px;background:rgba(38,38,38,.96);border-radius:0 0 4px 4px;"></div>
<svg style="left:13.8px;top:808.8px" width="28" height="28" viewBox="0 0 28 28"><use href="#t_rip"/></svg>
<svg style="left:41.2px;top:833.8px" width="4" height="4" viewBox="0 0 4 4"><path d="M4 0V4H0Z" fill="#9a9a9a"/></svg>
<div style="left:2094px;top:80px;width:19.5px;height:1166px;background:#191919;border-radius:0 0 5px 0;"></div>
<div style="left:2093px;top:83.1px;width:17.9px;height:40.5px;background:#1d1d1d;border-radius:0 4.5px 4.5px 0;box-shadow:inset 0 0 0 1px #303030;"></div>
<span class="t" style="left:2090.4px;top:95.3px;width:24.4px;letter-spacing:0.36px;transform:rotate(90deg);color:#d0d0d0">Item</span>
<div style="left:2093px;top:128.1px;width:17.9px;height:39.9px;background:#2b2b2b;border-radius:0 4.5px 4.5px 0;box-shadow:inset 0 0 0 1px #333;"></div>
<span class="t" style="left:2090.4px;top:140.1px;width:24.7px;letter-spacing:0.68px;transform:rotate(90deg);color:#e6e6e6">Tool</span>
<div style="left:2093px;top:172.1px;width:17.9px;height:40.6px;background:#1d1d1d;border-radius:0 4.5px 4.5px 0;box-shadow:inset 0 0 0 1px #303030;"></div>
<span class="t" style="left:2090.4px;top:184.4px;width:23.8px;letter-spacing:-0.23px;transform:rotate(90deg);color:#d0d0d0">View</span>
<div style="left:1905px;top:81px;width:182.5px;height:90px;background:rgba(62,62,62,.94);border-radius:4px;"></div>
<svg style="left:1909.2px;top:86.8px;" width="13" height="13" viewBox="0 0 16 16"><use href="#chevd"/></svg>
<span class="t sh" style="left:1925.20px;top:85.33px;letter-spacing:0.274px;">Active Tool</span>
<svg style="left:2069.8px;top:90.6px" width="11" height="5.2" viewBox="0 0 11 5.2"><use href="#grip"/></svg>
<div style="left:1905px;top:174px;width:182.5px;height:24.5px;background:rgba(62,62,62,.94);border-radius:4px;"></div>
<svg style="left:1909.2px;top:179.8px;" width="13" height="13" viewBox="0 0 16 16"><use href="#chevr"/></svg>
<span class="t sh" style="left:1925.20px;top:178.33px;letter-spacing:0.046px;">Options</span>
<svg style="left:2069.8px;top:183.6px" width="11" height="5.2" viewBox="0 0 11 5.2"><use href="#grip"/></svg>
<div style="left:1905px;top:201px;width:182.5px;height:24.5px;background:rgba(62,62,62,.94);border-radius:4px;"></div>
<svg style="left:1909.2px;top:206.8px;" width="13" height="13" viewBox="0 0 16 16"><use href="#chevr"/></svg>
<span class="t sh" style="left:1925.20px;top:205.33px;letter-spacing:0.010px;">Workspace</span>
<svg style="left:2069.8px;top:210.6px" width="11" height="5.2" viewBox="0 0 11 5.2"><use href="#grip"/></svg>
<div style="left:1905px;top:228px;width:182.5px;height:24.5px;background:rgba(62,62,62,.94);border-radius:4px;"></div>
<svg style="left:1909.2px;top:233.8px;" width="13" height="13" viewBox="0 0 16 16"><use href="#chevr"/></svg>
<span class="t sh" style="left:1925.20px;top:232.33px;letter-spacing:-0.050px;">Bake ID Mask</span>
<svg style="left:2069.8px;top:237.6px" width="11" height="5.2" viewBox="0 0 11 5.2"><use href="#grip"/></svg>
<div style="left:1905px;top:255px;width:182.5px;height:59px;background:rgba(62,62,62,.94);border-radius:4px;"></div>
<svg style="left:1909.2px;top:260.8px;" width="13" height="13" viewBox="0 0 16 16"><use href="#chevd"/></svg>
<span class="t sh" style="left:1925.20px;top:259.33px;letter-spacing:0.195px;">ID Mask Editor</span>
<svg style="left:2069.8px;top:264.6px" width="11" height="5.2" viewBox="0 0 11 5.2"><use href="#grip"/></svg>
<svg style="left:1918px;top:112px" width="22" height="22" viewBox="0 0 28 28"><use href="#t_select"/></svg>
<span class="t" style="left:1949.40px;top:115.13px;letter-spacing:-0.125px;">Select Box</span>
<div style="left:1912.3px;top:144px;width:18.2px;height:17.8px;background:#4772b3;border-radius:4px 0 0 4px;"></div>
<svg style="left:1912.15px;top:143.65px;" width="18.5" height="18.5" viewBox="0 0 16 16"><use href="#sm_new"/></svg>
<div style="left:1931.1px;top:144px;width:18.1px;height:17.8px;background:#545454;border-radius:0;"></div>
<svg style="left:1930.9px;top:143.65px;" width="18.5" height="18.5" viewBox="0 0 16 16"><use href="#sm_ext"/></svg>
<div style="left:1949.8px;top:144px;width:18.2px;height:17.8px;background:#545454;border-radius:0;"></div>
<svg style="left:1949.65px;top:143.65px;" width="18.5" height="18.5" viewBox="0 0 16 16"><use href="#sm_sub"/></svg>
<div style="left:1968.6px;top:144px;width:18.1px;height:17.8px;background:#545454;border-radius:0;"></div>
<svg style="left:1968.4px;top:143.65px;" width="18.5" height="18.5" viewBox="0 0 16 16"><use href="#sm_inv"/></svg>
<div style="left:1987.3px;top:144px;width:18.1px;height:17.8px;background:#545454;border-radius:0 4px 4px 0;"></div>
<svg style="left:1987.1px;top:143.65px;" width="18.5" height="18.5" viewBox="0 0 16 16"><use href="#sm_and"/></svg>
<div style="left:1912.3px;top:288px;width:145.7px;height:17.6px;background:#1d1d1d;border-radius:4px 0 0 4px;"></div>
<svg style="left:1915px;top:290px;" width="14" height="14" viewBox="0 0 16 16"><use href="#idmask"/></svg>
<div style="left:2058.6px;top:288px;width:19.4px;height:17.6px;background:#545454;border-radius:0 4px 4px 0;"></div>
<svg style="left:2059.8px;top:288.3px;" width="17" height="17" viewBox="0 0 16 16"><use href="#plus"/></svg>
<div style="left:1898.6px;top:248.2px;width:197.4px;height:69.6px;border-radius:6px;border:4.3px solid #ff0000;box-sizing:border-box;"></div>
<svg style="left:0;top:0" width="2560" height="400" viewBox="0 0 2560 400"><g stroke-width="2.2" stroke-linecap="round"><path d="M1844.5 128.3L1844.5 99.2" stroke="#2c80e8"/><path d="M1844.5 128.3L1874.4 121.7" stroke="#6ba01e"/><path d="M1844.5 128.3L1858 140.7" stroke="#f63652"/></g><circle cx="1831.7" cy="115.3" r="6.6" fill="rgba(110,50,62,.55)" stroke="#b8364e" stroke-width="1.3"/><circle cx="1815.8" cy="134.1" r="7.2" fill="rgba(86,120,30,.6)" stroke="#7cbe1e" stroke-width="1.3"/><circle cx="1845.6" cy="156.7" r="6.8" fill="rgba(50,84,140,.6)" stroke="#2d6ec8" stroke-width="1.3"/><circle cx="1844.5" cy="99.2" r="8.4" fill="#2c80e8"/><circle cx="1874.4" cy="121.7" r="8.1" fill="#6ba01e"/><circle cx="1858" cy="140.7" r="8.5" fill="#f63652"/><g font-family="Liberation Sans,sans-serif" font-size="10.5" font-weight="700" text-anchor="middle"><text x="1844.5" y="103" fill="#0c2a52">Z</text><text x="1874.4" y="125.5" fill="#1e3206">Y</text><text x="1858" y="144.5" fill="#52101c">X</text></g><circle cx="1872.9" cy="182.5" r="13.8" fill="rgba(32,32,32,.7)"/><circle cx="1872.9" cy="212.7" r="13.8" fill="rgba(32,32,32,.7)"/><circle cx="1872.9" cy="242.6" r="13.8" fill="rgba(32,32,32,.7)"/><circle cx="1872.9" cy="272.5" r="13.8" fill="rgba(32,32,32,.7)"/></svg>
<svg style="left:1864.4px;top:174px;" width="17" height="17" viewBox="0 0 16 16"><use href="#nav_zoom"/></svg>
<svg style="left:1864.4px;top:204.2px;" width="17" height="17" viewBox="0 0 16 16"><use href="#nav_pan"/></svg>
<svg style="left:1864.4px;top:234.1px;" width="17" height="17" viewBox="0 0 16 16"><use href="#nav_cam"/></svg>
<svg style="left:1864.4px;top:264px;" width="17" height="17" viewBox="0 0 16 16"><use href="#nav_persp"/></svg>
<svg style="left:2018px;top:350px" width="19" height="19" viewBox="0 0 19 19"><path d="M9.5 1V8M9.5 11V18M1 9.5H8M11 9.5H18" stroke="#1a1a1a" stroke-width="3.4"/><path d="M9.5 1.7V7.6M9.5 11.4V17.3M1.7 9.5H7.6M11.4 9.5H17.3" stroke="#fff" stroke-width="2"/></svg>
<svg style="left:9.5px;top:5px" width="16" height="16" viewBox="0 0 16 16"><use href="#blender"/></svg>
<span class="t" style="left:35.60px;top:5.13px;letter-spacing:-0.323px;color:#e3e3e3;">File</span>
<span class="t" style="left:68.90px;top:5.13px;letter-spacing:-0.072px;color:#e3e3e3;">Edit</span>
<span class="t" style="left:104.40px;top:5.13px;letter-spacing:-0.441px;color:#e3e3e3;">Render</span>
<span class="t" style="left:155.00px;top:5.13px;letter-spacing:0.057px;color:#e3e3e3;">Window</span>
<span class="t" style="left:212.50px;top:5.13px;letter-spacing:-0.239px;color:#e3e3e3;">Help</span>
<div style="left:260.8px;top:5.6px;width:53px;height:19.2px;background:#303030;border-radius:4px 4px 0 0;"></div>
<span class="t" style="left:270.25px;top:8.23px;letter-spacing:-0.055px;color:#fff;">Layout</span>
<div style="left:314.6px;top:5.6px;width:68.6px;height:19.2px;background:#1d1d1d;border-radius:4px 4px 0 0;"></div>
<span class="t" style="left:325.40px;top:8.23px;letter-spacing:0.115px;color:#989898;">Modeling</span>
<div style="left:384px;top:5.6px;width:68.6px;height:19.2px;background:#1d1d1d;border-radius:4px 4px 0 0;"></div>
<span class="t" style="left:394.40px;top:8.23px;letter-spacing:0.053px;color:#989898;">Sculpting</span>
<div style="left:453.4px;top:5.6px;width:74px;height:19.2px;background:#1d1d1d;border-radius:4px 4px 0 0;"></div>
<span class="t" style="left:463.40px;top:8.23px;letter-spacing:-0.101px;color:#989898;">UV Editing</span>
<div style="left:528.2px;top:5.6px;width:87.4px;height:19.2px;background:#1d1d1d;border-radius:4px 4px 0 0;"></div>
<span class="t" style="left:538.75px;top:8.23px;letter-spacing:-0.058px;color:#989898;">Texture Paint</span>
<div style="left:616.4px;top:5.6px;width:61.8px;height:19.2px;background:#1d1d1d;border-radius:4px 4px 0 0;"></div>
<span class="t" style="left:626.30px;top:8.23px;letter-spacing:-0.053px;color:#989898;">Shading</span>
<div style="left:679px;top:5.6px;width:71.4px;height:19.2px;background:#1d1d1d;border-radius:4px 4px 0 0;"></div>
<span class="t" style="left:689.00px;top:8.23px;letter-spacing:0.046px;color:#989898;">Animation</span>
<div style="left:751.2px;top:5.6px;width:70.4px;height:19.2px;background:#1d1d1d;border-radius:4px 4px 0 0;"></div>
<span class="t" style="left:760.40px;top:8.23px;letter-spacing:-0.214px;color:#989898;">Rendering</span>
<div style="left:822.4px;top:5.6px;width:87.7px;height:19.2px;background:#1d1d1d;border-radius:4px 4px 0 0;"></div>
<span class="t" style="left:832.40px;top:8.23px;letter-spacing:0.320px;color:#989898;">Compositing</span>
<div style="left:910.9px;top:5.6px;width:107.2px;height:19.2px;background:#1d1d1d;border-radius:4px 4px 0 0;"></div>
<span class="t" style="left:921.00px;top:8.23px;letter-spacing:-0.034px;color:#989898;">Geometry Nodes</span>
<div style="left:1018.9px;top:5.6px;width:66px;height:19.2px;background:#1d1d1d;border-radius:4px 4px 0 0;"></div>
<span class="t" style="left:1029.00px;top:8.23px;letter-spacing:0.141px;color:#989898;">Scripting</span>
<div style="left:1085.7px;top:5.6px;width:20.3px;height:19.2px;background:#1d1d1d;border-radius:4px 4px 0 0;"></div>
<svg style="left:1090px;top:9.5px" width="12" height="12" viewBox="0 0 12 12"><path d="M6 1.5V10.5M1.5 6H10.5" stroke="#a8a8a8" stroke-width="1.1"/></svg>
<div style="left:2163.6px;top:3.2px;width:30.7px;height:19.2px;background:#232323;border-radius:4px 0 0 4px;"></div>
<svg style="left:2166px;top:4.8px;" width="16" height="16" viewBox="0 0 16 16"><use href="#scene"/></svg>
<svg style="left:2181.5px;top:6.8px;" width="13" height="13" viewBox="0 0 16 16"><use href="#chev"/></svg>
<div style="left:2194.9px;top:3.2px;width:119.1px;height:19.2px;background:#1d1d1d;border-radius:0;"></div>
<span class="t" style="left:2202.00px;top:5.03px;letter-spacing:-0.318px;">Scene</span>
<svg style="left:2295.5px;top:5.3px;" width="15" height="15" viewBox="0 0 16 16"><use href="#pin"/></svg>
<div style="left:2314.4px;top:3.2px;width:19.8px;height:19.2px;background:#545454;border-radius:0;"></div>
<svg style="left:2316.3px;top:4.8px;" width="16" height="16" viewBox="0 0 16 16"><use href="#copy"/></svg>
<div style="left:2334.8px;top:3.2px;width:19.9px;height:19.2px;background:#383838;border-radius:0 4px 4px 0;"></div>
<svg style="left:2336.8px;top:4.8px;" width="16" height="16" viewBox="0 0 16 16"><use href="#xclose"/></svg>
<div style="left:2163.6px;top:3.2px;width:191.1px;height:19.2px;border-radius:4px;box-shadow:inset 0 0 0 1px #3a3a3a;"></div>
<div style="left:2360.1px;top:3.2px;width:31.1px;height:19.2px;background:#232323;border-radius:4px 0 0 4px;"></div>
<svg style="left:2362.5px;top:4.8px;" width="16" height="16" viewBox="0 0 16 16"><use href="#viewlayer"/></svg>
<svg style="left:2378.5px;top:6.8px;" width="13" height="13" viewBox="0 0 16 16"><use href="#chev"/></svg>
<div style="left:2391.8px;top:3.2px;width:119.2px;height:19.2px;background:#1d1d1d;border-radius:0;"></div>
<span class="t" style="left:2399.00px;top:5.03px;letter-spacing:-0.117px;">ViewLayer</span>
<div style="left:2511.4px;top:3.2px;width:19.6px;height:19.2px;background:#545454;border-radius:0;"></div>
<svg style="left:2513.2px;top:4.8px;" width="16" height="16" viewBox="0 0 16 16"><use href="#copy"/></svg>
<div style="left:2531.6px;top:3.2px;width:20.1px;height:19.2px;background:#383838;border-radius:0 4px 4px 0;"></div>
<svg style="left:2533.7px;top:4.8px;" width="16" height="16" viewBox="0 0 16 16"><use href="#xclose"/></svg>
<div style="left:2360.1px;top:3.2px;width:191.6px;height:19.2px;border-radius:4px;box-shadow:inset 0 0 0 1px #3a3a3a;"></div>
<div style="left:2117.2px;top:27px;width:442px;height:423px;background:#282828;border-radius:5px;overflow:hidden">
<div style="left:0;top:45.7px;width:100%;height:20px;background:#2b2b2b"></div>
<div style="left:0;top:85.7px;width:100%;height:20px;background:#2b2b2b"></div>
<div style="left:0;top:125.7px;width:100%;height:20px;background:#2b2b2b"></div>
<div style="left:0;top:165.7px;width:100%;height:20px;background:#2b2b2b"></div>
<div style="left:0;top:205.7px;width:100%;height:20px;background:#2b2b2b"></div>
<div style="left:0;top:245.7px;width:100%;height:20px;background:#2b2b2b"></div>
<div style="left:0;top:285.7px;width:100%;height:20px;background:#2b2b2b"></div>
<div style="left:0;top:325.7px;width:100%;height:20px;background:#2b2b2b"></div>
<div style="left:0;top:365.7px;width:100%;height:20px;background:#2b2b2b"></div>
<div style="left:0;top:405.7px;width:100%;height:20px;background:#2b2b2b"></div>
<div style="left:0;top:85.9px;width:100%;height:20px;background:#334d80"></div>
</div>
<div style="left:2125px;top:29.6px;width:31.8px;height:19px;background:#282828;border-radius:4px;box-shadow:inset 0 0 0 1px #3d3d3d;"></div>
<svg style="left:2128px;top:31.1px;" width="16" height="16" viewBox="0 0 16 16"><use href="#ed_outliner"/></svg>
<svg style="left:2143.9px;top:33.1px;" width="13" height="13" viewBox="0 0 16 16"><use href="#chev"/></svg>
<div style="left:2162.4px;top:29.6px;width:31.3px;height:19px;background:#282828;border-radius:4px;box-shadow:inset 0 0 0 1px #3d3d3d;"></div>
<svg style="left:2165px;top:31.1px;" width="16" height="16" viewBox="0 0 16 16"><use href="#viewlayer"/></svg>
<svg style="left:2180.9px;top:33.1px;" width="13" height="13" viewBox="0 0 16 16"><use href="#chev"/></svg>
<div style="left:2270.5px;top:29.6px;width:114.3px;height:19px;background:#1d1d1d;border-radius:4px;box-shadow:inset 0 0 0 1px #3d3d3d;"></div>
<svg style="left:2274px;top:31.6px;" width="15" height="15" viewBox="0 0 16 16"><use href="#search"/></svg>
<div style="left:2495.6px;top:29.6px;width:31px;height:19px;background:#282828;border-radius:4px;box-shadow:inset 0 0 0 1px #3d3d3d;"></div>
<svg style="left:2499px;top:31.6px;" width="15" height="15" viewBox="0 0 16 16"><use href="#filter"/></svg>
<svg style="left:2513.5px;top:33.1px;" width="13" height="13" viewBox="0 0 16 16"><use href="#chev"/></svg>
<div style="left:2532.2px;top:29.6px;width:19.5px;height:19px;background:#545454;border-radius:4px;"></div>
<svg style="left:2534px;top:31.1px;" width="16" height="16" viewBox="0 0 16 16"><use href="#newcoll"/></svg>
<svg style="left:2139.5px;top:55.9px;" width="15" height="15" viewBox="0 0 16 16"><use href="#coll"/></svg>
<span class="t" style="left:2161.20px;top:56.43px;letter-spacing:0.009px;color:#d2d2d2;">Scene Collection</span>
<svg style="left:2139.5px;top:76.6px;" width="14" height="14" viewBox="0 0 16 16"><use href="#tri_d"/></svg>
<div style="left:2157.2px;top:74.6px;width:19.2px;height:17.6px;background:rgba(255,255,255,.2);border-radius:4px;box-shadow:inset 0 0 0 1px rgba(255,255,255,.12);"></div>
<svg style="left:2159.5px;top:75.9px;" width="15" height="15" viewBox="0 0 16 16"><use href="#coll"/></svg>
<span class="t" style="left:2181.20px;top:76.13px;letter-spacing:0.226px;color:#d2d2d2;">Collection</span>
<div style="left:2146px;top:98px;width:1px;height:49.8px;background:#555;"></div>
<svg style="left:2160.5px;top:96.9px;" width="13" height="13" viewBox="0 0 16 16"><use href="#tri_r"/></svg>
<svg style="left:2178.6px;top:95.2px;" width="16" height="16" viewBox="0 0 16 16"><use href="#ob_camera"/></svg>
<span class="t" style="left:2201.20px;top:96.13px;letter-spacing:-0.243px;color:#d2d2d2;">Camera</span>
<div style="left:2261.2px;top:94.2px;width:19.6px;height:17.6px;background:rgba(255,255,255,.2);border-radius:4px;box-shadow:inset 0 0 0 1px rgba(255,255,255,.1);"></div>
<svg style="left:2263px;top:95px;" width="16" height="16" viewBox="0 0 16 16"><use href="#d_camera"/></svg>
<svg style="left:2119.5px;top:115.5px;" width="15" height="15" viewBox="0 0 16 16"><use href="#editmode"/></svg>
<svg style="left:2160.5px;top:116.9px;" width="13" height="13" viewBox="0 0 16 16"><use href="#tri_r"/></svg>
<div style="left:2177.2px;top:114.2px;width:19.6px;height:17.6px;background:rgba(255,255,255,.22);border-radius:4px;box-shadow:inset 0 0 0 1px rgba(255,255,255,.14);"></div>
<svg style="left:2180px;top:116.2px;" width="14" height="14" viewBox="0 0 16 16"><use href="#ob_mesh"/></svg>
<span class="t" style="left:2201.20px;top:116.13px;letter-spacing:-0.233px;color:#ffaf29;">Cube</span>
<div style="left:2248.2px;top:114.2px;width:19.6px;height:17.6px;background:rgba(30,80,110,.55);border-radius:4px;box-shadow:inset 0 0 0 1px rgba(255,255,255,.14);"></div>
<svg style="left:2250px;top:115px;" width="16" height="16" viewBox="0 0 16 16"><use href="#d_mesh"/></svg>
<svg style="left:2160.5px;top:136.9px;" width="13" height="13" viewBox="0 0 16 16"><use href="#tri_r"/></svg>
<svg style="left:2179px;top:135.4px;" width="16" height="16" viewBox="0 0 16 16"><use href="#ob_light"/></svg>
<span class="t" style="left:2201.20px;top:136.13px;letter-spacing:0.269px;color:#d2d2d2;">Light</span>
<svg style="left:2249.5px;top:135.4px;" width="16" height="16" viewBox="0 0 16 16"><use href="#d_light"/></svg>
<svg style="left:2492.75px;top:75.75px;" width="14.5" height="14.5" viewBox="0 0 16 16"><use href="#check"/></svg>
<svg style="left:2512px;top:75.5px;" width="15" height="15" viewBox="0 0 16 16"><use href="#eye"/></svg>
<svg style="left:2532.35px;top:75.35px;" width="14.5" height="14.5" viewBox="0 0 16 16"><use href="#rcam"/></svg>
<svg style="left:2512px;top:95.5px;" width="15" height="15" viewBox="0 0 16 16"><use href="#eye"/></svg>
<svg style="left:2532.35px;top:95.35px;" width="14.5" height="14.5" viewBox="0 0 16 16"><use href="#rcam"/></svg>
<svg style="left:2512px;top:115.5px;" width="15" height="15" viewBox="0 0 16 16"><use href="#eye"/></svg>
<svg style="left:2532.35px;top:115.35px;" width="14.5" height="14.5" viewBox="0 0 16 16"><use href="#rcam"/></svg>
<svg style="left:2512px;top:135.5px;" width="15" height="15" viewBox="0 0 16 16"><use href="#eye"/></svg>
<svg style="left:2532.35px;top:135.35px;" width="14.5" height="14.5" viewBox="0 0 16 16"><use href="#rcam"/></svg>
<div style="left:2117.2px;top:453px;width:442px;height:894.4px;background:#303030;border-radius:5px;overflow:hidden">
<div style="left:0;top:24.8px;width:27.8px;height:870px;background:#212121"></div>
<div style="left:1.4px;top:254.5px;width:26.4px;height:25.6px;background:#303030;border-radius:4px 0 0 4px"></div>
<div style="left:3px;top:61.5px;width:24.8px;height:1px;background:rgba(0,0,0,.3)"></div>
<div style="left:3px;top:212.5px;width:24.8px;height:1px;background:rgba(0,0,0,.3)"></div>
<div style="left:3px;top:246.5px;width:24.8px;height:1px;background:rgba(0,0,0,.3)"></div>
<div style="left:3px;top:448.5px;width:24.8px;height:1px;background:rgba(0,0,0,.3)"></div>
</div>
<div style="left:2125.4px;top:455.3px;width:31.2px;height:19.4px;background:#282828;border-radius:4px;box-shadow:inset 0 0 0 1px #3d3d3d;"></div>
<svg style="left:2128.3px;top:456.4px;" width="17" height="17" viewBox="0 0 16 16"><use href="#ed_props"/></svg>
<svg style="left:2143.7px;top:458.9px;" width="13" height="13" viewBox="0 0 16 16"><use href="#chev"/></svg>
<div style="left:2282.8px;top:455.3px;width:113.4px;height:19.4px;background:#1d1d1d;border-radius:4px;box-shadow:inset 0 0 0 1px #3a3a3a;"></div>
<svg style="left:2286.5px;top:457.4px;" width="15" height="15" viewBox="0 0 16 16"><use href="#search"/></svg>
<div style="left:2535.4px;top:455.3px;width:16.4px;height:19.4px;background:#282828;border-radius:4px;box-shadow:inset 0 0 0 1px #3d3d3d;"></div>
<svg style="left:2537.1px;top:458.7px;" width="13" height="13" viewBox="0 0 16 16"><use href="#chev"/></svg>
<svg style="left:2124px;top:491.8px;" width="16" height="16" viewBox="0 0 16 16"><use href="#p_tool"/></svg>
<svg style="left:2124px;top:527px;" width="16" height="16" viewBox="0 0 16 16"><use href="#p_render"/></svg>
<svg style="left:2124px;top:556px;" width="16" height="16" viewBox="0 0 16 16"><use href="#p_output"/></svg>
<svg style="left:2124px;top:583.8px;" width="16" height="16" viewBox="0 0 16 16"><use href="#p_vlayer"/></svg>
<svg style="left:2124px;top:611.6px;" width="16" height="16" viewBox="0 0 16 16"><use href="#p_scene"/></svg>
<svg style="left:2124px;top:640.2px;" width="16" height="16" viewBox="0 0 16 16"><use href="#p_world"/></svg>
<svg style="left:2124px;top:676.5px;" width="16" height="16" viewBox="0 0 16 16"><use href="#p_coll"/></svg>
<svg style="left:2124px;top:711.9px;" width="16" height="16" viewBox="0 0 16 16"><use href="#p_object"/></svg>
<svg style="left:2124px;top:740.4px;" width="16" height="16" viewBox="0 0 16 16"><use href="#p_modifier"/></svg>
<svg style="left:2124px;top:768px;" width="16" height="16" viewBox="0 0 16 16"><use href="#p_particles"/></svg>
<svg style="left:2124px;top:796px;" width="16" height="16" viewBox="0 0 16 16"><use href="#p_physics"/></svg>
<svg style="left:2124px;top:824px;" width="16" height="16" viewBox="0 0 16 16"><use href="#p_constraint"/></svg>
<svg style="left:2124px;top:852px;" width="16" height="16" viewBox="0 0 16 16"><use href="#p_data"/></svg>
<svg style="left:2124px;top:880px;" width="16" height="16" viewBox="0 0 16 16"><use href="#p_material"/></svg>
<svg style="left:2155.5px;top:488.5px;" width="15" height="15" viewBox="0 0 16 16"><use href="#objdata"/></svg>
<span class="t" style="left:2179.00px;top:488.53px;letter-spacing:-0.133px;">Cube</span>
<svg style="left:2535.5px;top:488.5px;" width="15" height="15" viewBox="0 0 16 16"><use href="#pin2"/></svg>
<div style="left:2153.8px;top:522.8px;width:30.6px;height:18.4px;background:#282828;border-radius:4px 0 0 4px;box-shadow:inset 0 0 0 1px #3d3d3d;"></div>
<svg style="left:2157.1px;top:524.5px;" width="15" height="15" viewBox="0 0 16 16"><use href="#objdata"/></svg>
<svg style="left:2171.5px;top:526px;" width="13" height="13" viewBox="0 0 16 16"><use href="#chev"/></svg>
<div style="left:2185px;top:522.8px;width:366.8px;height:18.4px;background:#1d1d1d;border-radius:0 4px 4px 0;box-shadow:inset 0 0 0 1px #3a3a3a;"></div>
<span class="t" style="left:2191.90px;top:524.33px;letter-spacing:-0.133px;">Cube</span>
<div style="left:2153.2px;top:552.6px;width:398.6px;height:280px;background:#3d3d3d;border-radius:4px;"></div>
<svg style="left:2158.9px;top:558.9px;" width="13" height="13" viewBox="0 0 16 16"><use href="#chevd"/></svg>
<span class="t sh" style="left:2175.40px;top:557.33px;letter-spacing:0.064px;">Transform</span>
<svg style="left:2534.5px;top:562.3px" width="11" height="5.2" viewBox="0 0 11 5.2"><use href="#grip"/></svg>
<div style="left:2311.8px;top:584.8px;width:191.4px;height:18.4px;background:#545454;border-radius:4px 4px 0 0;"></div>
<span class="t" style="left:2248.40px;top:586.53px;letter-spacing:-0.082px;">Location X</span>
<span class="t" style="left:2397.88px;top:586.33px;letter-spacing:-0.097px;">0 m</span>
<svg style="left:2506.9px;top:586.1px;" width="15" height="15" viewBox="0 0 16 16"><use href="#unlock"/></svg>
<div style="left:2531.9px;top:593.1px;width:4.2px;height:4.2px;background:#d8d8d8;border-radius:50%;"></div>
<div style="left:2311.8px;top:604.8px;width:191.4px;height:18.4px;background:#545454;border-radius:0;"></div>
<span class="t" style="left:2294.78px;top:606.53px;letter-spacing:-0.116px;">Y</span>
<span class="t" style="left:2397.88px;top:606.33px;letter-spacing:-0.097px;">0 m</span>
<svg style="left:2506.9px;top:606.1px;" width="15" height="15" viewBox="0 0 16 16"><use href="#unlock"/></svg>
<div style="left:2531.9px;top:613.1px;width:4.2px;height:4.2px;background:#d8d8d8;border-radius:50%;"></div>
<div style="left:2311.8px;top:624.8px;width:191.4px;height:19px;background:#545454;border-radius:0 0 4px 4px;"></div>
<span class="t" style="left:2295.42px;top:626.53px;letter-spacing:-0.106px;">Z</span>
<span class="t" style="left:2397.88px;top:626.33px;letter-spacing:-0.097px;">0 m</span>
<svg style="left:2506.9px;top:626.1px;" width="15" height="15" viewBox="0 0 16 16"><use href="#unlock"/></svg>
<div style="left:2531.9px;top:633.1px;width:4.2px;height:4.2px;background:#d8d8d8;border-radius:50%;"></div>
<div style="left:2311.8px;top:650.2px;width:191.4px;height:18.4px;background:#545454;border-radius:4px 4px 0 0;"></div>
<span class="t" style="left:2249.05px;top:651.93px;letter-spacing:-0.081px;">Rotation X</span>
<span class="t" style="left:2401.94px;top:651.73px;letter-spacing:-0.083px;">0°</span>
<svg style="left:2506.9px;top:651.5px;" width="15" height="15" viewBox="0 0 16 16"><use href="#unlock"/></svg>
<div style="left:2531.9px;top:658.5px;width:4.2px;height:4.2px;background:#d8d8d8;border-radius:50%;"></div>
<div style="left:2311.8px;top:670.2px;width:191.4px;height:18.4px;background:#545454;border-radius:0;"></div>
<span class="t" style="left:2294.78px;top:671.93px;letter-spacing:-0.116px;">Y</span>
<span class="t" style="left:2401.94px;top:671.73px;letter-spacing:-0.083px;">0°</span>
<svg style="left:2506.9px;top:671.5px;" width="15" height="15" viewBox="0 0 16 16"><use href="#unlock"/></svg>
<div style="left:2531.9px;top:678.5px;width:4.2px;height:4.2px;background:#d8d8d8;border-radius:50%;"></div>
<div style="left:2311.8px;top:690.2px;width:191.4px;height:19px;background:#545454;border-radius:0 0 4px 4px;"></div>
<span class="t" style="left:2295.42px;top:691.93px;letter-spacing:-0.106px;">Z</span>
<span class="t" style="left:2401.94px;top:691.73px;letter-spacing:-0.083px;">0°</span>
<svg style="left:2506.9px;top:691.5px;" width="15" height="15" viewBox="0 0 16 16"><use href="#unlock"/></svg>
<div style="left:2531.9px;top:698.5px;width:4.2px;height:4.2px;background:#d8d8d8;border-radius:50%;"></div>
<div style="left:2311.8px;top:740.4px;width:191.4px;height:18.4px;background:#545454;border-radius:4px 4px 0 0;"></div>
<span class="t" style="left:2263.02px;top:742.13px;letter-spacing:-0.086px;">Scale X</span>
<span class="t" style="left:2393.10px;top:741.93px;letter-spacing:-0.087px;">1.000</span>
<svg style="left:2506.9px;top:741.7px;" width="15" height="15" viewBox="0 0 16 16"><use href="#unlock"/></svg>
<div style="left:2531.9px;top:748.7px;width:4.2px;height:4.2px;background:#d8d8d8;border-radius:50%;"></div>
<div style="left:2311.8px;top:760.4px;width:191.4px;height:18.4px;background:#545454;border-radius:0;"></div>
<span class="t" style="left:2294.78px;top:762.13px;letter-spacing:-0.116px;">Y</span>
<span class="t" style="left:2393.10px;top:761.93px;letter-spacing:-0.087px;">1.000</span>
<svg style="left:2506.9px;top:761.7px;" width="15" height="15" viewBox="0 0 16 16"><use href="#unlock"/></svg>
<div style="left:2531.9px;top:768.7px;width:4.2px;height:4.2px;background:#d8d8d8;border-radius:50%;"></div>
<div style="left:2311.8px;top:780.4px;width:191.4px;height:19px;background:#545454;border-radius:0 0 4px 4px;"></div>
<span class="t" style="left:2295.42px;top:782.13px;letter-spacing:-0.106px;">Z</span>
<span class="t" style="left:2393.10px;top:781.93px;letter-spacing:-0.087px;">1.000</span>
<svg style="left:2506.9px;top:781.7px;" width="15" height="15" viewBox="0 0 16 16"><use href="#unlock"/></svg>
<div style="left:2531.9px;top:788.7px;width:4.2px;height:4.2px;background:#d8d8d8;border-radius:50%;"></div>
<span class="t" style="left:2273.82px;top:716.93px;letter-spacing:-0.109px;">Mode</span>
<div style="left:2311.8px;top:715.2px;width:191.4px;height:18.8px;background:#282828;border-radius:4px;box-shadow:inset 0 0 0 1px #3d3d3d;"></div>
<span class="t" style="left:2318.60px;top:716.93px;letter-spacing:-0.263px;">XYZ Euler</span>
<svg style="left:2490.5px;top:718.7px;" width="13" height="13" viewBox="0 0 16 16"><use href="#chev"/></svg>
<div style="left:2531.9px;top:723.7px;width:4.2px;height:4.2px;background:#d8d8d8;border-radius:50%;"></div>
<svg style="left:2173.5px;top:814.1px;" width="13" height="13" viewBox="0 0 16 16"><use href="#chevr"/></svg>
<span class="t sh" style="left:2189.00px;top:812.73px;letter-spacing:0.032px;">Delta Transform</span>
<div style="left:2153.2px;top:835.4px;width:398.6px;height:24.6px;background:#3d3d3d;border-radius:4px;"></div>
<svg style="left:2159.3px;top:841.3px;" width="13" height="13" viewBox="0 0 16 16"><use href="#chevr"/></svg>
<span class="t sh" style="left:2175.00px;top:839.73px;letter-spacing:-0.151px;">Relations</span>
<svg style="left:2534.5px;top:844.7px" width="11" height="5.2" viewBox="0 0 11 5.2"><use href="#grip"/></svg>
<div style="left:2153.2px;top:862.4px;width:398.6px;height:24.6px;background:#3d3d3d;border-radius:4px;"></div>
<svg style="left:2159.3px;top:868.3px;" width="13" height="13" viewBox="0 0 16 16"><use href="#chevr"/></svg>
<span class="t sh" style="left:2175.00px;top:866.73px;letter-spacing:0.115px;">Collections</span>
<svg style="left:2534.5px;top:871.7px" width="11" height="5.2" viewBox="0 0 11 5.2"><use href="#grip"/></svg>
<div style="left:2153.2px;top:889.4px;width:398.6px;height:24.6px;background:#3d3d3d;border-radius:4px;"></div>
<svg style="left:2159.3px;top:895.3px;" width="13" height="13" viewBox="0 0 16 16"><use href="#chevr"/></svg>
<span class="t sh" style="left:2175.00px;top:893.73px;letter-spacing:0.172px;">Instancing</span>
<svg style="left:2534.5px;top:898.7px" width="11" height="5.2" viewBox="0 0 11 5.2"><use href="#grip"/></svg>
<div style="left:2153.2px;top:916.4px;width:398.6px;height:24.6px;background:#3d3d3d;border-radius:4px;"></div>
<svg style="left:2159.3px;top:922.3px;" width="13" height="13" viewBox="0 0 16 16"><use href="#chevr"/></svg>
<span class="t sh" style="left:2175.00px;top:920.73px;letter-spacing:0.141px;">Motion Paths</span>
<svg style="left:2534.5px;top:925.7px" width="11" height="5.2" viewBox="0 0 11 5.2"><use href="#grip"/></svg>
<div style="left:2153.2px;top:943.4px;width:398.6px;height:24.6px;background:#3d3d3d;border-radius:4px;"></div>
<svg style="left:2159.3px;top:949.3px;" width="13" height="13" viewBox="0 0 16 16"><use href="#chevr"/></svg>
<span class="t sh" style="left:2175.00px;top:947.73px;letter-spacing:0.291px;">Visibility</span>
<svg style="left:2534.5px;top:952.7px" width="11" height="5.2" viewBox="0 0 11 5.2"><use href="#grip"/></svg>
<div style="left:2153.2px;top:970.4px;width:398.6px;height:24.6px;background:#3d3d3d;border-radius:4px;"></div>
<svg style="left:2159.3px;top:976.3px;" width="13" height="13" viewBox="0 0 16 16"><use href="#chevr"/></svg>
<span class="t sh" style="left:2175.00px;top:974.73px;letter-spacing:0.164px;">Viewport Display</span>
<svg style="left:2534.5px;top:979.7px" width="11" height="5.2" viewBox="0 0 11 5.2"><use href="#grip"/></svg>
<div style="left:2153.2px;top:997.4px;width:398.6px;height:24.6px;background:#3d3d3d;border-radius:4px;"></div>
<svg style="left:2159.3px;top:1003.3px;" width="13" height="13" viewBox="0 0 16 16"><use href="#chevr"/></svg>
<span class="t sh" style="left:2175.00px;top:1001.73px;letter-spacing:-0.092px;">Line Art</span>
<svg style="left:2534.5px;top:1006.7px" width="11" height="5.2" viewBox="0 0 11 5.2"><use href="#grip"/></svg>
<div style="left:2153.2px;top:1024.4px;width:398.6px;height:24.6px;background:#3d3d3d;border-radius:4px;"></div>
<svg style="left:2159.3px;top:1030.3px;" width="13" height="13" viewBox="0 0 16 16"><use href="#chevr"/></svg>
<span class="t sh" style="left:2175.00px;top:1028.73px;letter-spacing:0.079px;">Custom Properties</span>
<svg style="left:2534.5px;top:1033.7px" width="11" height="5.2" viewBox="0 0 11 5.2"><use href="#grip"/></svg>
<div style="left:1px;top:1249px;width:2112.5px;height:99px;background:#303030;border-radius:5px;overflow:hidden">
<div style="left:0;top:24.8px;width:100%;height:22.8px;background:#1d1d1d"></div>
<div style="left:0;top:47.6px;width:100%;height:52px;background:#212121"></div>
<div style="left:77.6px;top:47.6px;width:1958.0px;height:52px;background:#303030"></div>
<div style="left:30.0px;top:47.6px;width:1px;height:52px;background:rgba(0,0,0,.22)"></div><div style="left:69.2px;top:47.6px;width:1.2px;height:52px;background:#1a1a1a"></div><div style="left:108.6px;top:47.6px;width:1px;height:52px;background:rgba(0,0,0,.22)"></div><div style="left:147.8px;top:47.6px;width:1.2px;height:52px;background:#1a1a1a"></div><div style="left:187.2px;top:47.6px;width:1px;height:52px;background:rgba(0,0,0,.22)"></div><div style="left:226.4px;top:47.6px;width:1.2px;height:52px;background:#1a1a1a"></div><div style="left:265.9px;top:47.6px;width:1px;height:52px;background:rgba(0,0,0,.22)"></div><div style="left:305.1px;top:47.6px;width:1.2px;height:52px;background:#1a1a1a"></div><div style="left:344.5px;top:47.6px;width:1px;height:52px;background:rgba(0,0,0,.22)"></div><div style="left:383.7px;top:47.6px;width:1.2px;height:52px;background:#1a1a1a"></div><div style="left:423.1px;top:47.6px;width:1px;height:52px;background:rgba(0,0,0,.22)"></div><div style="left:462.3px;top:47.6px;width:1.2px;height:52px;background:#1a1a1a"></div><div style="left:501.8px;top:47.6px;width:1px;height:52px;background:rgba(0,0,0,.22)"></div><div style="left:541.0px;top:47.6px;width:1.2px;height:52px;background:#1a1a1a"></div><div style="left:580.4px;top:47.6px;width:1px;height:52px;background:rgba(0,0,0,.22)"></div><div style="left:619.6px;top:47.6px;width:1.2px;height:52px;background:#1a1a1a"></div><div style="left:659.0px;top:47.6px;width:1px;height:52px;background:rgba(0,0,0,.22)"></div><div style="left:698.2px;top:47.6px;width:1.2px;height:52px;background:#1a1a1a"></div><div style="left:737.7px;top:47.6px;width:1px;height:52px;background:rgba(0,0,0,.22)"></div><div style="left:776.9px;top:47.6px;width:1.2px;height:52px;background:#1a1a1a"></div><div style="left:816.3px;top:47.6px;width:1px;height:52px;background:rgba(0,0,0,.22)"></div><div style="left:855.5px;top:47.6px;width:1.2px;height:52px;background:#1a1a1a"></div><div style="left:894.9px;top:47.6px;width:1px;height:52px;background:rgba(0,0,0,.22)"></div><div style="left:934.1px;top:47.6px;width:1.2px;height:52px;background:#1a1a1a"></div><div style="left:973.5px;top:47.6px;width:1px;height:52px;background:rgba(0,0,0,.22)"></div><div style="left:1012.8px;top:47.6px;width:1.2px;height:52px;background:#1a1a1a"></div><div style="left:1052.2px;top:47.6px;width:1px;height:52px;background:rgba(0,0,0,.22)"></div><div style="left:1091.4px;top:47.6px;width:1.2px;height:52px;background:#1a1a1a"></div><div style="left:1130.8px;top:47.6px;width:1px;height:52px;background:rgba(0,0,0,.22)"></div><div style="left:1170.0px;top:47.6px;width:1.2px;height:52px;background:#1a1a1a"></div><div style="left:1209.4px;top:47.6px;width:1px;height:52px;background:rgba(0,0,0,.22)"></div><div style="left:1248.7px;top:47.6px;width:1.2px;height:52px;background:#1a1a1a"></div><div style="left:1288.1px;top:47.6px;width:1px;height:52px;background:rgba(0,0,0,.22)"></div><div style="left:1327.3px;top:47.6px;width:1.2px;height:52px;background:#1a1a1a"></div><div style="left:1366.7px;top:47.6px;width:1px;height:52px;background:rgba(0,0,0,.22)"></div><div style="left:1405.9px;top:47.6px;width:1.2px;height:52px;background:#1a1a1a"></div><div style="left:1445.3px;top:47.6px;width:1px;height:52px;background:rgba(0,0,0,.22)"></div><div style="left:1484.6px;top:47.6px;width:1.2px;height:52px;background:#1a1a1a"></div><div style="left:1524.0px;top:47.6px;width:1px;height:52px;background:rgba(0,0,0,.22)"></div><div style="left:1563.2px;top:47.6px;width:1.2px;height:52px;background:#1a1a1a"></div><div style="left:1602.6px;top:47.6px;width:1px;height:52px;background:rgba(0,0,0,.22)"></div><div style="left:1641.8px;top:47.6px;width:1.2px;height:52px;background:#1a1a1a"></div><div style="left:1681.2px;top:47.6px;width:1px;height:52px;background:rgba(0,0,0,.22)"></div><div style="left:1720.5px;top:47.6px;width:1.2px;height:52px;background:#1a1a1a"></div><div style="left:1759.9px;top:47.6px;width:1px;height:52px;background:rgba(0,0,0,.22)"></div><div style="left:1799.1px;top:47.6px;width:1.2px;height:52px;background:#1a1a1a"></div><div style="left:1838.5px;top:47.6px;width:1px;height:52px;background:rgba(0,0,0,.22)"></div><div style="left:1877.7px;top:47.6px;width:1.2px;height:52px;background:#1a1a1a"></div><div style="left:1917.1px;top:47.6px;width:1px;height:52px;background:rgba(0,0,0,.22)"></div><div style="left:1956.4px;top:47.6px;width:1.2px;height:52px;background:#1a1a1a"></div><div style="left:1995.8px;top:47.6px;width:1px;height:52px;background:rgba(0,0,0,.22)"></div><div style="left:2035.0px;top:47.6px;width:1.2px;height:52px;background:#1a1a1a"></div><div style="left:2074.4px;top:47.6px;width:1px;height:52px;background:rgba(0,0,0,.22)"></div>
<div style="left:8px;top:89.2px;width:2096px;height:7.4px;background:#585858;border-radius:4px"></div>
<div style="left:9.4px;top:90.4px;width:5px;height:5px;background:#2e2e2e;border-radius:50%"></div>
<div style="left:2097.6px;top:90.4px;width:5px;height:5px;background:#2e2e2e;border-radius:50%"></div>
<div style="left:76.58px;top:44px;width:2.1px;height:56px;background:#4772b3"></div>
<div style="left:65.5px;top:28.1px;width:23.8px;height:16.7px;background:#4772b3;border-radius:3.5px"></div>
<div style="left:2104px;top:25px;width:9px;height:75px;background:#1d1d1d"></div>
<div style="left:2107.8px;top:29px;width:3px;height:46px;background:#3a3a3a;border-radius:2px"></div>
<div style="left:-4px;top:39px;width:12px;height:14px;background:#222;border-radius:4px"></div>
</div>
<svg style="left:1px;top:1290px" width="8" height="11" viewBox="0 0 8 11"><path d="M1.2 1.5L5.2 5.5L1.2 9.5" fill="none" stroke="#999" stroke-width="1.1"/></svg>
<svg style="left:2105.5px;top:1289.5px" width="8" height="11" viewBox="0 0 8 11"><path d="M5.8 1.5L1.8 5.5L5.8 9.5" fill="none" stroke="#777" stroke-width="1.1"/></svg>
<span class="t" style="left:75.42px;top:1277.73px;letter-spacing:-0.097px;color:#fff;">1</span>
<span class="t" style="left:143.05px;top:1278.33px;letter-spacing:-0.097px;color:#b4b4b4;">10</span>
<span class="t" style="left:221.68px;top:1278.33px;letter-spacing:-0.097px;color:#b4b4b4;">20</span>
<span class="t" style="left:300.31px;top:1278.33px;letter-spacing:-0.097px;color:#b4b4b4;">30</span>
<span class="t" style="left:378.95px;top:1278.33px;letter-spacing:-0.097px;color:#b4b4b4;">40</span>
<span class="t" style="left:457.58px;top:1278.33px;letter-spacing:-0.097px;color:#b4b4b4;">50</span>
<span class="t" style="left:536.21px;top:1278.33px;letter-spacing:-0.097px;color:#b4b4b4;">60</span>
<span class="t" style="left:614.85px;top:1278.33px;letter-spacing:-0.097px;color:#b4b4b4;">70</span>
<span class="t" style="left:693.48px;top:1278.33px;letter-spacing:-0.097px;color:#b4b4b4;">80</span>
<span class="t" style="left:772.11px;top:1278.33px;letter-spacing:-0.097px;color:#b4b4b4;">90</span>
<span class="t" style="left:847.57px;top:1278.33px;letter-spacing:-0.097px;color:#b4b4b4;">100</span>
<span class="t" style="left:926.62px;top:1278.33px;letter-spacing:-0.092px;color:#b4b4b4;">110</span>
<span class="t" style="left:1004.83px;top:1278.33px;letter-spacing:-0.097px;color:#b4b4b4;">120</span>
<span class="t" style="left:1083.47px;top:1278.33px;letter-spacing:-0.097px;color:#b4b4b4;">130</span>
<span class="t" style="left:1162.10px;top:1278.33px;letter-spacing:-0.097px;color:#b4b4b4;">140</span>
<span class="t" style="left:1240.73px;top:1278.33px;letter-spacing:-0.097px;color:#b4b4b4;">150</span>
<span class="t" style="left:1319.37px;top:1278.33px;letter-spacing:-0.097px;color:#b4b4b4;">160</span>
<span class="t" style="left:1398.00px;top:1278.33px;letter-spacing:-0.097px;color:#b4b4b4;">170</span>
<span class="t" style="left:1476.63px;top:1278.33px;letter-spacing:-0.097px;color:#b4b4b4;">180</span>
<span class="t" style="left:1555.26px;top:1278.33px;letter-spacing:-0.097px;color:#b4b4b4;">190</span>
<span class="t" style="left:1633.90px;top:1278.33px;letter-spacing:-0.097px;color:#b4b4b4;">200</span>
<span class="t" style="left:1712.53px;top:1278.33px;letter-spacing:-0.097px;color:#b4b4b4;">210</span>
<span class="t" style="left:1791.16px;top:1278.33px;letter-spacing:-0.097px;color:#b4b4b4;">220</span>
<span class="t" style="left:1869.80px;top:1278.33px;letter-spacing:-0.097px;color:#b4b4b4;">230</span>
<span class="t" style="left:1948.43px;top:1278.33px;letter-spacing:-0.097px;color:#b4b4b4;">240</span>
<span class="t" style="left:2027.06px;top:1278.33px;letter-spacing:-0.097px;color:#b4b4b4;">250</span>
<div style="left:8.5px;top:1252.6px;width:31.1px;height:18.6px;background:#2c2c2c;border-radius:4px;box-shadow:inset 0 0 0 1px #3f3f3f;"></div>
<svg style="left:11.85px;top:1254.25px;" width="15.5" height="15.5" viewBox="0 0 16 16"><use href="#ed_time"/></svg>
<svg style="left:26.9px;top:1256.1px;" width="13" height="13" viewBox="0 0 16 16"><use href="#chev"/></svg>
<div style="left:45.3px;top:1252.6px;width:70.9px;height:18.6px;background:#2c2c2c;border-radius:4px 0 0 4px;box-shadow:inset 0 0 0 1px #3f3f3f;"></div>
<span class="t" style="left:53.40px;top:1254.13px;letter-spacing:-0.109px;">Playback</span>
<svg style="left:103.9px;top:1256.3px;" width="13" height="13" viewBox="0 0 16 16"><use href="#chev"/></svg>
<div style="left:116.2px;top:1252.6px;width:60.4px;height:18.6px;background:#2c2c2c;border-radius:0 4px 4px 0;box-shadow:inset 0 0 0 1px #3f3f3f;"></div>
<span class="t" style="left:124.40px;top:1254.13px;letter-spacing:-0.228px;">Keying</span>
<svg style="left:163.7px;top:1256.3px;" width="13" height="13" viewBox="0 0 16 16"><use href="#chev"/></svg>
<span class="t" style="left:186.30px;top:1254.13px;letter-spacing:-0.159px;">View</span>
<span class="t" style="left:226.50px;top:1254.13px;letter-spacing:-0.116px;">Marker</span>
<div style="left:965px;top:1252.6px;width:18.2px;height:18.6px;background:#545454;border-radius:4px 0 0 4px;"></div>
<svg style="left:966.7px;top:1254.5px;" width="15" height="15" viewBox="0 0 16 16"><use href="#rec"/></svg>
<div style="left:983.8px;top:1252.6px;width:19.6px;height:18.6px;background:#2b2b2b;border-radius:0 4px 4px 0;box-shadow:inset 0 0 0 1px #3a3a3a;"></div>
<svg style="left:987.5px;top:1256.6px;opacity:.4" width="12" height="12" viewBox="0 0 16 16"><use href="#chev"/></svg>
<div style="left:1010px;top:1252.6px;width:18.82px;height:18.6px;background:#545454;border-radius:4px 0 0 4px;"></div>
<svg style="left:1012.56px;top:1255px;" width="14" height="14" viewBox="0 0 16 16"><use href="#pb_first"/></svg>
<div style="left:1029.72px;top:1252.6px;width:18.82px;height:18.6px;background:#545454;border-radius:0;"></div>
<svg style="left:1032.28px;top:1255px;" width="14" height="14" viewBox="0 0 16 16"><use href="#pb_prevkey"/></svg>
<div style="left:1049.44px;top:1252.6px;width:18.82px;height:18.6px;background:#545454;border-radius:0;"></div>
<svg style="left:1052px;top:1255px;" width="14" height="14" viewBox="0 0 16 16"><use href="#pb_rev"/></svg>
<div style="left:1069.16px;top:1252.6px;width:18.82px;height:18.6px;background:#545454;border-radius:0;"></div>
<svg style="left:1071.72px;top:1255px;" width="14" height="14" viewBox="0 0 16 16"><use href="#pb_play"/></svg>
<div style="left:1088.88px;top:1252.6px;width:18.82px;height:18.6px;background:#545454;border-radius:0;"></div>
<svg style="left:1091.44px;top:1255px;" width="14" height="14" viewBox="0 0 16 16"><use href="#pb_nextkey"/></svg>
<div style="left:1108.6px;top:1252.6px;width:18.82px;height:18.6px;background:#545454;border-radius:0 4px 4px 0;"></div>
<svg style="left:1111.16px;top:1255px;" width="14" height="14" viewBox="0 0 16 16"><use href="#pb_last"/></svg>
<div style="left:1834.8px;top:1252.6px;width:73.6px;height:18.6px;background:#545454;border-radius:4px;"></div>
<span class="t" style="left:1868.22px;top:1254.33px;letter-spacing:-0.097px;">1</span>
<div style="left:1915px;top:1252.6px;width:18.2px;height:18.6px;background:#545454;border-radius:4px 0 0 4px;"></div>
<svg style="left:1916.9px;top:1254.3px;" width="15" height="15" viewBox="0 0 16 16"><use href="#clock"/></svg>
<div style="left:1933.8px;top:1252.6px;width:87.6px;height:18.6px;background:#545454;border-radius:0;"></div>
<span class="t" style="left:1949.30px;top:1254.33px;letter-spacing:-0.020px;">Start</span>
<span class="t" style="left:2002.32px;top:1254.33px;letter-spacing:-0.097px;">1</span>
<div style="left:2022.4px;top:1252.6px;width:84.9px;height:18.6px;background:#545454;border-radius:0 4px 4px 0;"></div>
<span class="t" style="left:2038.40px;top:1254.33px;letter-spacing:-0.547px;">End</span>
<span class="t" style="left:2074.94px;top:1254.33px;letter-spacing:-0.097px;">250</span>
<svg style="left:9.85px;top:1351.65px;" width="15.5" height="15.5" viewBox="0 0 16 16"><use href="#mouse_l"/></svg>
<span class="t" style="left:34.30px;top:1351.33px;letter-spacing:-0.140px;color:#a8a8a8;">Select</span>
<svg style="left:220.85px;top:1351.65px;" width="15.5" height="15.5" viewBox="0 0 16 16"><use href="#mouse_m"/></svg>
<span class="t" style="left:245.30px;top:1351.33px;letter-spacing:-0.121px;color:#a8a8a8;">Rotate View</span>
<svg style="left:432.25px;top:1351.65px;" width="15.5" height="15.5" viewBox="0 0 16 16"><use href="#mouse_r"/></svg>
<span class="t" style="left:456.10px;top:1351.33px;letter-spacing:-0.125px;color:#a8a8a8;">Call Menu</span>
<span class="t" style="left:2522.59px;top:1351.33px;letter-spacing:-0.077px;color:#a8a8a8;">4.0.2</span>
</div>
</body></html>
